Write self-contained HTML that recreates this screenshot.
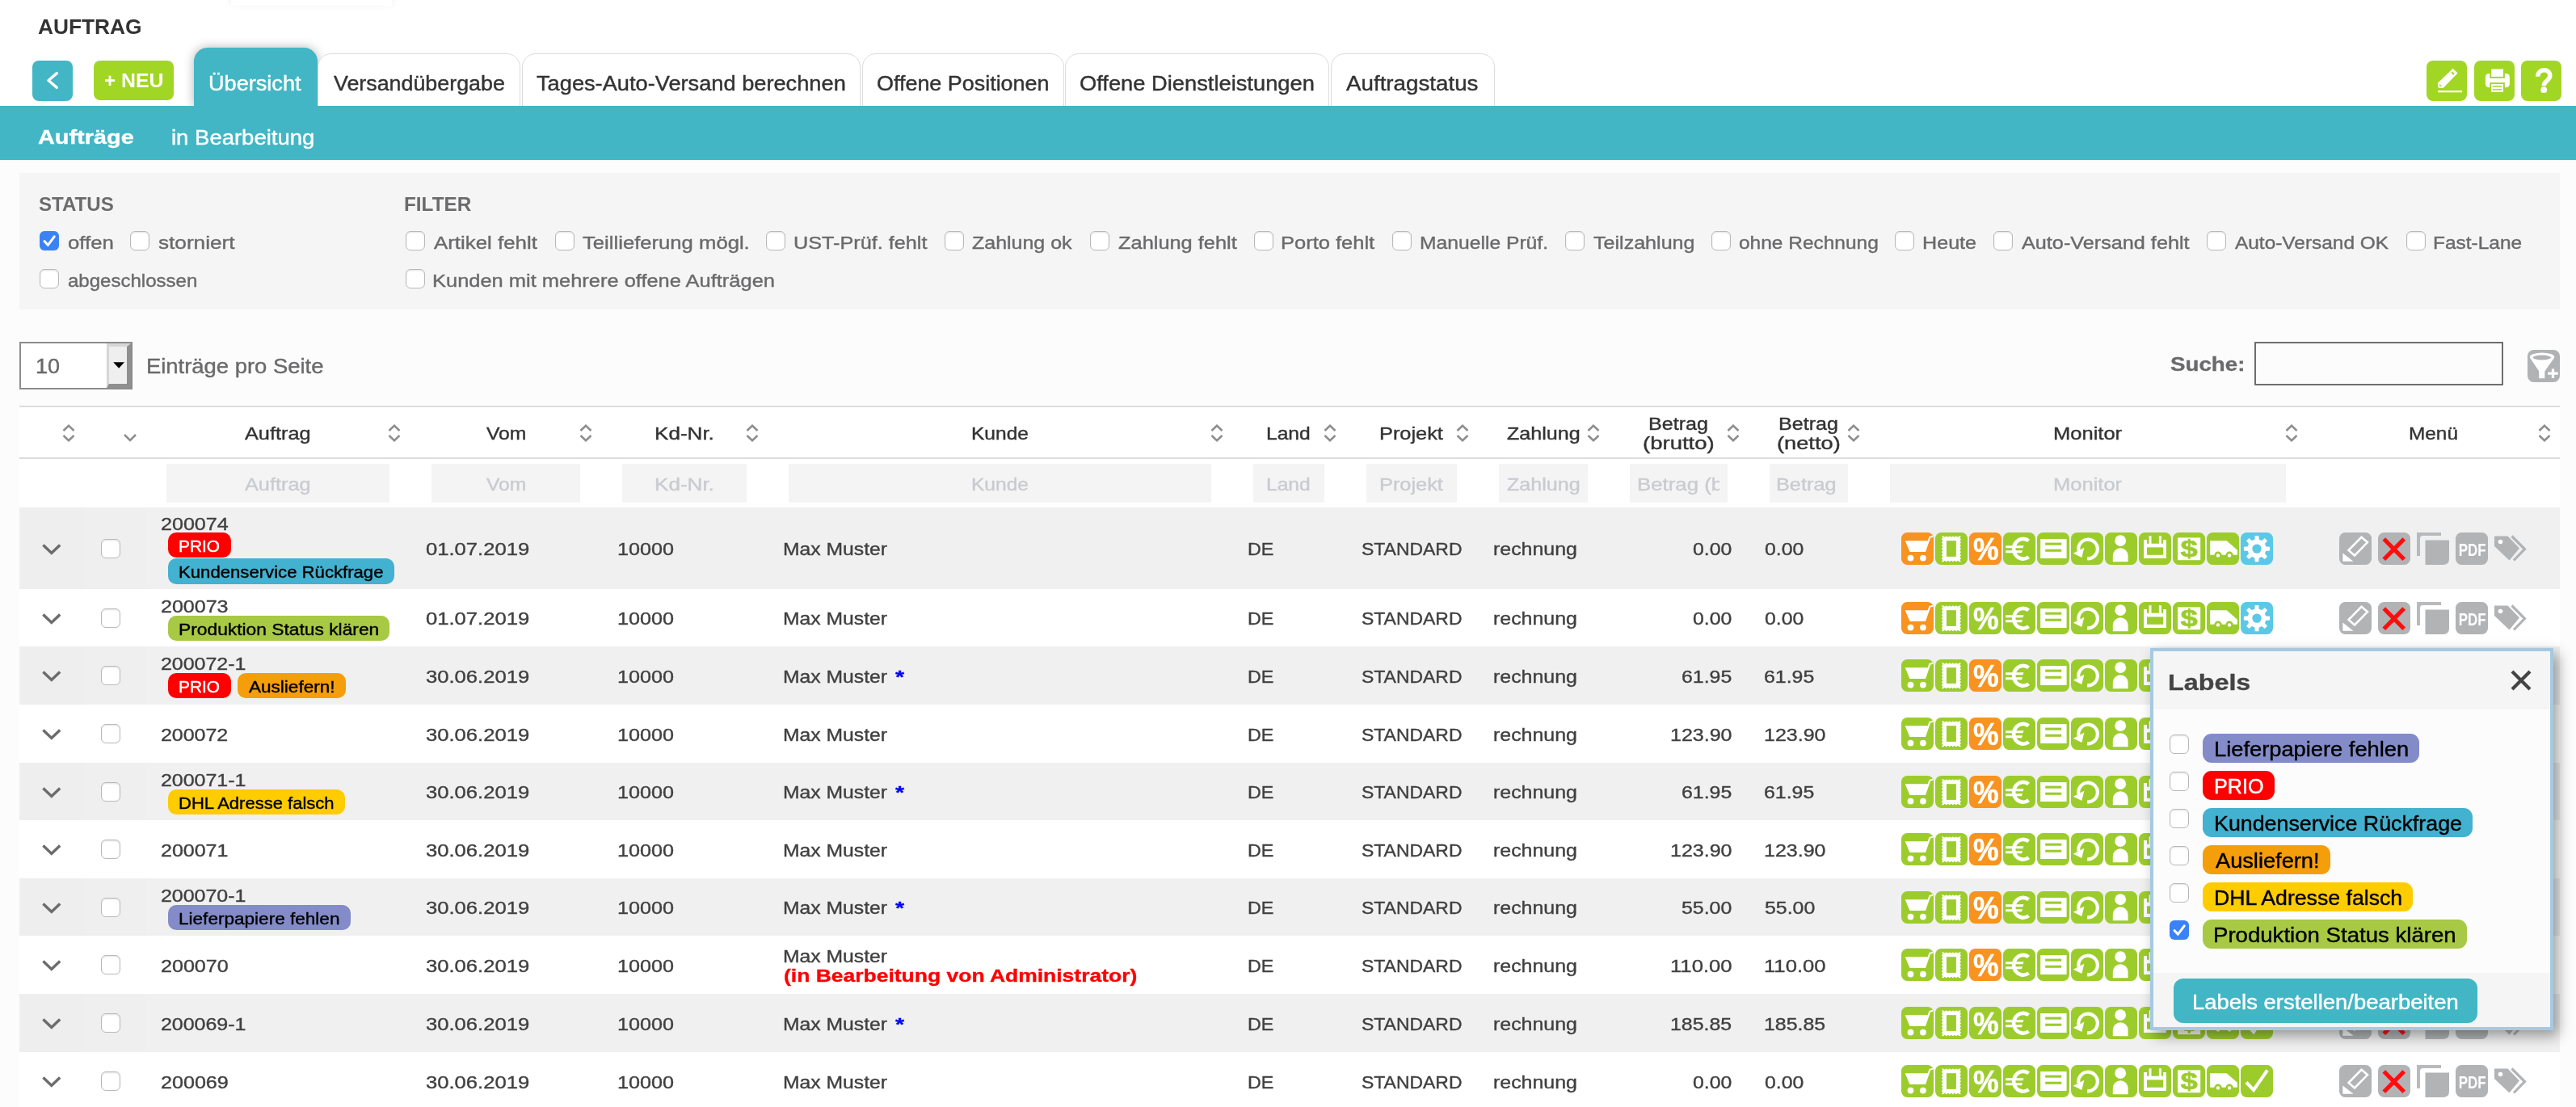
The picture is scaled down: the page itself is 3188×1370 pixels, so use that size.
<!DOCTYPE html>
<html><head><meta charset="utf-8"><title>Auftrag</title>
<style>
html,body{margin:0;padding:0;}
body{width:3188px;height:1370px;overflow:hidden;background:#fcfcfc;font-family:"Liberation Sans",sans-serif;position:relative;}
#wrap{position:absolute;left:0;top:0;width:3188px;height:1370px;overflow:hidden;will-change:transform;}
.b{position:absolute;display:block;}
.t{position:absolute;display:block;white-space:pre;line-height:1;transform-origin:0 0;}
svg text{font-family:"Liberation Sans",sans-serif;}
</style></head><body>
<div id="wrap">
<div class="b" style="left:0.00px;top:0.00px;width:3188.00px;height:131.00px;background:#fff;"></div><div class="b" style="left:286.00px;top:-12.00px;width:199.00px;height:19.00px;background:#fff;box-shadow:0 -5px 12px rgba(0,0,0,.13);"></div><span class="t" style="left:47.37px;top:20.84px;font-size:25px;color:#333;transform:scaleX(1.0516);font-weight:bold;">AUFTRAG</span><div class="b" style="left:40.00px;top:75.00px;width:50.00px;height:50.00px;background:#42b6c4;border-radius:8px;"></div><svg class="b" style="left:40.00px;top:75.00px;" width="50" height="50" viewBox="0 0 50 50"><path d="M30.3 15.6 L20 24.5 L30.300 33.4" fill="none" stroke="#fff" stroke-width="3.400" stroke-linecap="round" stroke-linejoin="round"/></svg><div class="b" style="left:116.00px;top:75.00px;width:99.00px;height:48.50px;background:#a2d624;border-radius:8px;"></div><span class="t" style="left:129.00px;top:87.68px;font-size:24px;color:#fff;transform:scaleX(1.0000);font-weight:bold;">+</span><span class="t" style="left:149.60px;top:87.68px;font-size:24px;color:#fff;transform:scaleX(1.0336);font-weight:bold;">NEU</span><div class="b" style="left:240.00px;top:59.00px;width:152.50px;height:72.50px;background:#42b6c4;border-radius:17px 17px 0 0;box-shadow:0 0 13px rgba(0,0,0,.30);"></div><span class="t" style="left:258.44px;top:91.27px;font-size:24.96px;color:#fff;transform:scaleX(1.0866);-webkit-text-stroke:0.4px currentColor;">Übersicht</span><div class="b" style="left:393.00px;top:66.00px;width:249.00px;height:70.00px;background:#fff;border:1px solid #dcdcdc;border-radius:17px 17px 0 0;"></div><span class="t" style="left:413.14px;top:91.27px;font-size:24.96px;color:#333;transform:scaleX(1.0751);-webkit-text-stroke:0.4px currentColor;">Versandübergabe</span><div class="b" style="left:645.50px;top:66.00px;width:417.80px;height:70.00px;background:#fff;border:1px solid #dcdcdc;border-radius:17px 17px 0 0;"></div><span class="t" style="left:663.80px;top:91.27px;font-size:24.96px;color:#333;transform:scaleX(1.0906);-webkit-text-stroke:0.4px currentColor;">Tages-Auto-Versand berechnen</span><div class="b" style="left:1066.50px;top:66.00px;width:248.50px;height:70.00px;background:#fff;border:1px solid #dcdcdc;border-radius:17px 17px 0 0;"></div><span class="t" style="left:1084.56px;top:91.27px;font-size:24.96px;color:#333;transform:scaleX(1.0787);-webkit-text-stroke:0.4px currentColor;">Offene Positionen</span><div class="b" style="left:1318.00px;top:66.00px;width:325.00px;height:70.00px;background:#fff;border:1px solid #dcdcdc;border-radius:17px 17px 0 0;"></div><span class="t" style="left:1336.04px;top:91.27px;font-size:24.96px;color:#333;transform:scaleX(1.0939);-webkit-text-stroke:0.4px currentColor;">Offene Dienstleistungen</span><div class="b" style="left:1646.50px;top:66.00px;width:201.00px;height:70.00px;background:#fff;border:1px solid #dcdcdc;border-radius:17px 17px 0 0;"></div><span class="t" style="left:1665.94px;top:91.27px;font-size:24.96px;color:#333;transform:scaleX(1.1116);-webkit-text-stroke:0.4px currentColor;">Auftragstatus</span><div class="b" style="left:3003.00px;top:75.00px;width:50.00px;height:50.00px;background:#a2d624;border-radius:8px;"></div><div class="b" style="left:3062.00px;top:75.00px;width:50.00px;height:50.00px;background:#a2d624;border-radius:8px;"></div><div class="b" style="left:3120.00px;top:75.00px;width:50.00px;height:50.00px;background:#a2d624;border-radius:8px;"></div><svg class="b" style="left:3003.00px;top:75.00px;" width="50" height="50" viewBox="0 0 50 50"><path d="M32.7 9.700 L38.500 15.600 L20.600 33.900 H16.200 Q14.100 33.900 14.100 31.800 V27.500 Z" fill="#fff"/><path d="M31.2 14.200 L34 17" stroke="#a2d624" stroke-width="2.200"/><path d="M16.2 28.800 V31.800 H19.200 Z" fill="#a2d624"/><rect x="14.100" y="37.100" width="30" height="2.200" fill="#fff"/></svg><svg class="b" style="left:3062.00px;top:75.00px;" width="50" height="50" viewBox="0 0 50 50"><rect x="13.900" y="16" width="30" height="17.300" rx="4.500" fill="#fff"/><rect x="19.300" y="9" width="18.600" height="12.800" fill="#a2d624"/><rect x="21.200" y="10.500" width="14.800" height="9.400" fill="#fff"/><rect x="19.300" y="27.200" width="18.600" height="8" fill="#a2d624"/><rect x="21.200" y="29" width="14.800" height="9.800" fill="#fff"/><rect x="22.900" y="31.200" width="11.300" height="1.500" fill="#a2d624"/><rect x="22.900" y="35.100" width="11.300" height="1.500" fill="#a2d624"/></svg><svg class="b" style="left:3120.00px;top:75.00px;" width="50" height="50" viewBox="0 0 50 50"><path d="M20.700 19.800 C20.700 9.300 35.800 9.300 35.800 18.600 C35.800 25 28.200 24.600 28.200 31.300" fill="none" stroke="#fff" stroke-width="5.400"/><circle cx="28.200" cy="36.200" r="3.900" fill="#fff"/></svg><div class="b" style="left:0.00px;top:131.00px;width:3188.00px;height:66.50px;background:#42b6c4;"></div><span class="t" style="left:47.28px;top:158.48px;font-size:24.12px;color:#fff;transform:scaleX(1.1975);font-weight:bold;-webkit-text-stroke:0.35px currentColor;">Aufträge</span><span class="t" style="left:211.93px;top:157.77px;font-size:24.96px;color:#fff;transform:scaleX(1.1018);-webkit-text-stroke:0.4px currentColor;">in Bearbeitung</span><div class="b" style="left:24.00px;top:214.00px;width:3143.50px;height:168.50px;background:#f5f5f5;"></div><span class="t" style="left:47.60px;top:241.43px;font-size:24px;color:#6b6b6d;transform:scaleX(1.0039);font-weight:bold;">STATUS</span><span class="t" style="left:499.63px;top:241.43px;font-size:24px;color:#6b6b6d;transform:scaleX(1.0137);font-weight:bold;">FILTER</span><div class="b" style="left:49.00px;top:286.00px;width:24.00px;height:24.00px;background:#3b82f7;border-radius:6px;"></div><svg class="b" style="left:49.00px;top:286.00px;" width="24" height="24" viewBox="0 0 24 24"><path d="M6 12.5 L10.3 17.3 L18.2 6.8" fill="none" stroke="#fff" stroke-width="3" stroke-linecap="round" stroke-linejoin="round"/></svg><span class="t" style="left:83.53px;top:288.53px;font-size:22.88px;color:#6a6a6c;transform:scaleX(1.1268);-webkit-text-stroke:0.4px currentColor;">offen</span><div class="b" style="left:161.00px;top:286.00px;width:24.00px;height:24.00px;background:#fff;border:1.5px solid #b9b9b9;border-radius:6px;box-sizing:border-box;box-shadow:inset 0 1px 2px rgba(0,0,0,.12);"></div><span class="t" style="left:195.56px;top:288.53px;font-size:22.88px;color:#6a6a6c;transform:scaleX(1.1440);-webkit-text-stroke:0.4px currentColor;">storniert</span><div class="b" style="left:49.00px;top:333.00px;width:24.00px;height:24.00px;background:#fff;border:1.5px solid #b9b9b9;border-radius:6px;box-sizing:border-box;box-shadow:inset 0 1px 2px rgba(0,0,0,.12);"></div><span class="t" style="left:83.60px;top:335.53px;font-size:22.88px;color:#6a6a6c;transform:scaleX(1.0502);-webkit-text-stroke:0.4px currentColor;">abgeschlossen</span><div class="b" style="left:502.00px;top:286.00px;width:24.00px;height:24.00px;background:#fff;border:1.5px solid #b9b9b9;border-radius:6px;box-sizing:border-box;box-shadow:inset 0 1px 2px rgba(0,0,0,.12);"></div><span class="t" style="left:537.00px;top:288.53px;font-size:22.88px;color:#6a6a6c;transform:scaleX(1.1300);-webkit-text-stroke:0.4px currentColor;">Artikel fehlt</span><div class="b" style="left:687.00px;top:286.00px;width:24.00px;height:24.00px;background:#fff;border:1.5px solid #b9b9b9;border-radius:6px;box-sizing:border-box;box-shadow:inset 0 1px 2px rgba(0,0,0,.12);"></div><span class="t" style="left:721.04px;top:288.53px;font-size:22.88px;color:#6a6a6c;transform:scaleX(1.1214);-webkit-text-stroke:0.4px currentColor;">Teillieferung mögl.</span><div class="b" style="left:948.00px;top:286.00px;width:24.00px;height:24.00px;background:#fff;border:1.5px solid #b9b9b9;border-radius:6px;box-sizing:border-box;box-shadow:inset 0 1px 2px rgba(0,0,0,.12);"></div><span class="t" style="left:981.87px;top:288.53px;font-size:22.88px;color:#6a6a6c;transform:scaleX(1.1029);-webkit-text-stroke:0.4px currentColor;">UST-Prüf. fehlt</span><div class="b" style="left:1169.00px;top:286.00px;width:24.00px;height:24.00px;background:#fff;border:1.5px solid #b9b9b9;border-radius:6px;box-sizing:border-box;box-shadow:inset 0 1px 2px rgba(0,0,0,.12);"></div><span class="t" style="left:1203.24px;top:288.53px;font-size:22.88px;color:#6a6a6c;transform:scaleX(1.0919);-webkit-text-stroke:0.4px currentColor;">Zahlung ok</span><div class="b" style="left:1348.80px;top:286.00px;width:24.00px;height:24.00px;background:#fff;border:1.5px solid #b9b9b9;border-radius:6px;box-sizing:border-box;box-shadow:inset 0 1px 2px rgba(0,0,0,.12);"></div><span class="t" style="left:1383.52px;top:288.53px;font-size:22.88px;color:#6a6a6c;transform:scaleX(1.1098);-webkit-text-stroke:0.4px currentColor;">Zahlung fehlt</span><div class="b" style="left:1551.70px;top:286.00px;width:24.00px;height:24.00px;background:#fff;border:1.5px solid #b9b9b9;border-radius:6px;box-sizing:border-box;box-shadow:inset 0 1px 2px rgba(0,0,0,.12);"></div><span class="t" style="left:1585.44px;top:288.53px;font-size:22.88px;color:#6a6a6c;transform:scaleX(1.1138);-webkit-text-stroke:0.4px currentColor;">Porto fehlt</span><div class="b" style="left:1722.90px;top:286.00px;width:24.00px;height:24.00px;background:#fff;border:1.5px solid #b9b9b9;border-radius:6px;box-sizing:border-box;box-shadow:inset 0 1px 2px rgba(0,0,0,.12);"></div><span class="t" style="left:1756.71px;top:288.53px;font-size:22.88px;color:#6a6a6c;transform:scaleX(1.0783);-webkit-text-stroke:0.4px currentColor;">Manuelle Prüf.</span><div class="b" style="left:1936.80px;top:286.00px;width:24.00px;height:24.00px;background:#fff;border:1.5px solid #b9b9b9;border-radius:6px;box-sizing:border-box;box-shadow:inset 0 1px 2px rgba(0,0,0,.12);"></div><span class="t" style="left:1971.65px;top:288.53px;font-size:22.88px;color:#6a6a6c;transform:scaleX(1.0963);-webkit-text-stroke:0.4px currentColor;">Teilzahlung</span><div class="b" style="left:2117.90px;top:286.00px;width:24.00px;height:24.00px;background:#fff;border:1.5px solid #b9b9b9;border-radius:6px;box-sizing:border-box;box-shadow:inset 0 1px 2px rgba(0,0,0,.12);"></div><span class="t" style="left:2151.88px;top:288.53px;font-size:22.88px;color:#6a6a6c;transform:scaleX(1.0697);-webkit-text-stroke:0.4px currentColor;">ohne Rechnung</span><div class="b" style="left:2345.00px;top:286.00px;width:24.00px;height:24.00px;background:#fff;border:1.5px solid #b9b9b9;border-radius:6px;box-sizing:border-box;box-shadow:inset 0 1px 2px rgba(0,0,0,.12);"></div><span class="t" style="left:2378.97px;top:288.53px;font-size:22.88px;color:#6a6a6c;transform:scaleX(1.0987);-webkit-text-stroke:0.4px currentColor;">Heute</span><div class="b" style="left:2467.20px;top:286.00px;width:24.00px;height:24.00px;background:#fff;border:1.5px solid #b9b9b9;border-radius:6px;box-sizing:border-box;box-shadow:inset 0 1px 2px rgba(0,0,0,.12);"></div><span class="t" style="left:2501.70px;top:288.53px;font-size:22.88px;color:#6a6a6c;transform:scaleX(1.1028);-webkit-text-stroke:0.4px currentColor;">Auto-Versand fehlt</span><div class="b" style="left:2731.00px;top:286.00px;width:24.00px;height:24.00px;background:#fff;border:1.5px solid #b9b9b9;border-radius:6px;box-sizing:border-box;box-shadow:inset 0 1px 2px rgba(0,0,0,.12);"></div><span class="t" style="left:2766.00px;top:288.53px;font-size:22.88px;color:#6a6a6c;transform:scaleX(1.0674);-webkit-text-stroke:0.4px currentColor;">Auto-Versand OK</span><div class="b" style="left:2977.80px;top:286.00px;width:24.00px;height:24.00px;background:#fff;border:1.5px solid #b9b9b9;border-radius:6px;box-sizing:border-box;box-shadow:inset 0 1px 2px rgba(0,0,0,.12);"></div><span class="t" style="left:3011.32px;top:288.53px;font-size:22.88px;color:#6a6a6c;transform:scaleX(1.0693);-webkit-text-stroke:0.4px currentColor;">Fast-Lane</span><div class="b" style="left:502.00px;top:333.00px;width:24.00px;height:24.00px;background:#fff;border:1.5px solid #b9b9b9;border-radius:6px;box-sizing:border-box;box-shadow:inset 0 1px 2px rgba(0,0,0,.12);"></div><span class="t" style="left:534.94px;top:335.53px;font-size:22.88px;color:#6a6a6c;transform:scaleX(1.1125);-webkit-text-stroke:0.4px currentColor;">Kunden mit mehrere offene Aufträgen</span><div class="b" style="left:24.00px;top:423.00px;width:140.00px;height:59.00px;background:#fff;border:2px solid #8c8c8c;box-sizing:border-box;"></div><div class="b" style="left:132.2px;top:425px;width:29.8px;height:55px;box-sizing:border-box;background:#efefef;border-style:solid;border-width:4px 5px 5px 3.5px;border-color:#d6d6d6 #8f8f8f #8f8f8f #d6d6d6;"></div><svg class="b" style="left:138.00px;top:446.00px;" width="20" height="12" viewBox="0 0 20 12"><path d="M2.2 2.2 H16 L9.1 9.8 Z" fill="#000"/></svg><span class="t" style="left:44.24px;top:441.47px;font-size:24.96px;color:#6a6a6c;transform:scaleX(1.0822);-webkit-text-stroke:0.4px currentColor;">10</span><span class="t" style="left:181.30px;top:441.47px;font-size:24.96px;color:#6a6a6c;transform:scaleX(1.0984);-webkit-text-stroke:0.4px currentColor;">Einträge pro Seite</span><span class="t" style="left:2686.45px;top:438.98px;font-size:24.12px;color:#6a6a6c;transform:scaleX(1.1499);font-weight:bold;-webkit-text-stroke:0.35px currentColor;">Suche:</span><div class="b" style="left:2790.00px;top:423.00px;width:308.00px;height:53.60px;background:#fcfcfc;border:2px solid #6e6e6e;box-sizing:border-box;"></div><div class="b" style="left:3128.00px;top:433.00px;width:40.00px;height:40.00px;background:#afb3b3;border-radius:8px;"></div><svg class="b" style="left:3128.00px;top:433.00px;" width="40" height="40" viewBox="0 0 40 40"><path d="M2.900 9.500 L14.200 26.500 V35.200 H21.300 V26.500 L33.300 9.500 Z" fill="#fff"/><ellipse cx="18.100" cy="8.600" rx="15.200" ry="5.200" fill="#fff"/><ellipse cx="17.800" cy="9.500" rx="11.300" ry="2.900" fill="#afb3b3"/><path d="M25.200 29.200 H37.700 M31.500 23.600 V34.900" stroke="#fff" stroke-width="3.300"/></svg><div class="b" style="left:24.00px;top:504.00px;width:3143.50px;height:870.00px;background:#fff;"></div><div class="b" style="left:24.00px;top:502.30px;width:3143.50px;height:2.00px;background:#dcdcdc;"></div><div class="b" style="left:24.00px;top:566.00px;width:3143.50px;height:2.00px;background:#dcdcdc;"></div><svg class="b" style="left:76.00px;top:524.00px;" width="18" height="24" viewBox="0 0 18 24"><path d="M2.5 9 L9 2.8 L15.5 9 M2.5 15 L9 21.2 L15.5 15" fill="none" stroke="#8e8e8e" stroke-width="2.6" stroke-linejoin="miter"/></svg><svg class="b" style="left:479.25px;top:524.00px;" width="18" height="24" viewBox="0 0 18 24"><path d="M2.5 9 L9 2.8 L15.5 9 M2.5 15 L9 21.2 L15.5 15" fill="none" stroke="#8e8e8e" stroke-width="2.6" stroke-linejoin="miter"/></svg><svg class="b" style="left:716.00px;top:524.00px;" width="18" height="24" viewBox="0 0 18 24"><path d="M2.5 9 L9 2.8 L15.5 9 M2.5 15 L9 21.2 L15.5 15" fill="none" stroke="#8e8e8e" stroke-width="2.6" stroke-linejoin="miter"/></svg><svg class="b" style="left:921.75px;top:524.00px;" width="18" height="24" viewBox="0 0 18 24"><path d="M2.5 9 L9 2.8 L15.5 9 M2.5 15 L9 21.2 L15.5 15" fill="none" stroke="#8e8e8e" stroke-width="2.6" stroke-linejoin="miter"/></svg><svg class="b" style="left:1497.00px;top:524.00px;" width="18" height="24" viewBox="0 0 18 24"><path d="M2.5 9 L9 2.8 L15.5 9 M2.5 15 L9 21.2 L15.5 15" fill="none" stroke="#8e8e8e" stroke-width="2.6" stroke-linejoin="miter"/></svg><svg class="b" style="left:1636.75px;top:524.00px;" width="18" height="24" viewBox="0 0 18 24"><path d="M2.5 9 L9 2.8 L15.5 9 M2.5 15 L9 21.2 L15.5 15" fill="none" stroke="#8e8e8e" stroke-width="2.6" stroke-linejoin="miter"/></svg><svg class="b" style="left:1800.75px;top:524.00px;" width="18" height="24" viewBox="0 0 18 24"><path d="M2.5 9 L9 2.8 L15.5 9 M2.5 15 L9 21.2 L15.5 15" fill="none" stroke="#8e8e8e" stroke-width="2.6" stroke-linejoin="miter"/></svg><svg class="b" style="left:1963.00px;top:524.00px;" width="18" height="24" viewBox="0 0 18 24"><path d="M2.5 9 L9 2.8 L15.5 9 M2.5 15 L9 21.2 L15.5 15" fill="none" stroke="#8e8e8e" stroke-width="2.6" stroke-linejoin="miter"/></svg><svg class="b" style="left:2135.75px;top:524.00px;" width="18" height="24" viewBox="0 0 18 24"><path d="M2.5 9 L9 2.8 L15.5 9 M2.5 15 L9 21.2 L15.5 15" fill="none" stroke="#8e8e8e" stroke-width="2.6" stroke-linejoin="miter"/></svg><svg class="b" style="left:2284.75px;top:524.00px;" width="18" height="24" viewBox="0 0 18 24"><path d="M2.5 9 L9 2.8 L15.5 9 M2.5 15 L9 21.2 L15.5 15" fill="none" stroke="#8e8e8e" stroke-width="2.6" stroke-linejoin="miter"/></svg><svg class="b" style="left:2826.75px;top:524.00px;" width="18" height="24" viewBox="0 0 18 24"><path d="M2.5 9 L9 2.8 L15.5 9 M2.5 15 L9 21.2 L15.5 15" fill="none" stroke="#8e8e8e" stroke-width="2.6" stroke-linejoin="miter"/></svg><svg class="b" style="left:3139.50px;top:524.00px;" width="18" height="24" viewBox="0 0 18 24"><path d="M2.5 9 L9 2.8 L15.5 9 M2.5 15 L9 21.2 L15.5 15" fill="none" stroke="#8e8e8e" stroke-width="2.6" stroke-linejoin="miter"/></svg><svg class="b" style="left:151.00px;top:534.00px;" width="20" height="14" viewBox="0 0 20 14"><path d="M3 4 L10 11 L17 4" fill="none" stroke="#8e8e8e" stroke-width="2.6"/></svg><span class="t" style="left:303.25px;top:525.28px;font-size:22.88px;color:#333;transform:scaleX(1.1050);-webkit-text-stroke:0.4px currentColor;">Auftrag</span><span class="t" style="left:601.64px;top:525.28px;font-size:22.88px;color:#333;transform:scaleX(1.0791);-webkit-text-stroke:0.4px currentColor;">Vom</span><span class="t" style="left:809.89px;top:525.28px;font-size:22.88px;color:#333;transform:scaleX(1.1393);-webkit-text-stroke:0.4px currentColor;">Kd-Nr.</span><span class="t" style="left:1201.52px;top:525.28px;font-size:22.88px;color:#333;transform:scaleX(1.0726);-webkit-text-stroke:0.4px currentColor;">Kunde</span><span class="t" style="left:1567.26px;top:525.28px;font-size:22.88px;color:#333;transform:scaleX(1.0756);-webkit-text-stroke:0.4px currentColor;">Land</span><span class="t" style="left:1706.70px;top:525.28px;font-size:22.88px;color:#333;transform:scaleX(1.1083);-webkit-text-stroke:0.4px currentColor;">Projekt</span><span class="t" style="left:1864.73px;top:525.28px;font-size:22.88px;color:#333;transform:scaleX(1.0980);-webkit-text-stroke:0.4px currentColor;">Zahlung</span><span class="t" style="left:2541.19px;top:525.28px;font-size:22.88px;color:#333;transform:scaleX(1.1160);-webkit-text-stroke:0.4px currentColor;">Monitor</span><span class="t" style="left:2980.78px;top:525.28px;font-size:22.88px;color:#333;transform:scaleX(1.0648);-webkit-text-stroke:0.4px currentColor;">Menü</span><span class="t" style="left:2039.97px;top:512.78px;font-size:22.88px;color:#333;transform:scaleX(1.0981);-webkit-text-stroke:0.4px currentColor;">Betrag</span><span class="t" style="left:2032.82px;top:537.28px;font-size:22.88px;color:#333;transform:scaleX(1.2034);-webkit-text-stroke:0.4px currentColor;">(brutto)</span><span class="t" style="left:2201.22px;top:512.78px;font-size:22.88px;color:#333;transform:scaleX(1.0981);-webkit-text-stroke:0.4px currentColor;">Betrag</span><span class="t" style="left:2199.08px;top:537.28px;font-size:22.88px;color:#333;transform:scaleX(1.1909);-webkit-text-stroke:0.4px currentColor;">(netto)</span><div class="b" style="left:205.75px;top:574.00px;width:275.75px;height:47.50px;background:#f4f4f4;"></div><span class="t" style="left:303.25px;top:587.78px;font-size:22.88px;color:#c9cbcf;transform:scaleX(1.1050);-webkit-text-stroke:0.4px currentColor;">Auftrag</span><div class="b" style="left:533.75px;top:574.00px;width:184.00px;height:47.50px;background:#f4f4f4;"></div><span class="t" style="left:601.64px;top:587.78px;font-size:22.88px;color:#c9cbcf;transform:scaleX(1.0791);-webkit-text-stroke:0.4px currentColor;">Vom</span><div class="b" style="left:769.75px;top:574.00px;width:153.75px;height:47.50px;background:#f4f4f4;"></div><span class="t" style="left:809.89px;top:587.78px;font-size:22.88px;color:#c9cbcf;transform:scaleX(1.1393);-webkit-text-stroke:0.4px currentColor;">Kd-Nr.</span><div class="b" style="left:975.75px;top:574.00px;width:523.00px;height:47.50px;background:#f4f4f4;"></div><span class="t" style="left:1201.52px;top:587.78px;font-size:22.88px;color:#c9cbcf;transform:scaleX(1.0726);-webkit-text-stroke:0.4px currentColor;">Kunde</span><div class="b" style="left:1550.75px;top:574.00px;width:87.75px;height:47.50px;background:#f4f4f4;"></div><span class="t" style="left:1567.26px;top:587.78px;font-size:22.88px;color:#c9cbcf;transform:scaleX(1.0756);-webkit-text-stroke:0.4px currentColor;">Land</span><div class="b" style="left:1690.50px;top:574.00px;width:112.00px;height:47.50px;background:#f4f4f4;"></div><span class="t" style="left:1706.70px;top:587.78px;font-size:22.88px;color:#c9cbcf;transform:scaleX(1.1083);-webkit-text-stroke:0.4px currentColor;">Projekt</span><div class="b" style="left:1854.50px;top:574.00px;width:110.00px;height:47.50px;background:#f4f4f4;"></div><span class="t" style="left:1864.73px;top:587.78px;font-size:22.88px;color:#c9cbcf;transform:scaleX(1.0980);-webkit-text-stroke:0.4px currentColor;">Zahlung</span><div class="b" style="left:2338.75px;top:574.00px;width:489.75px;height:47.50px;background:#f4f4f4;"></div><span class="t" style="left:2541.19px;top:587.78px;font-size:22.88px;color:#c9cbcf;transform:scaleX(1.1160);-webkit-text-stroke:0.4px currentColor;">Monitor</span><div class="b" style="left:2017.00px;top:574.00px;width:120.50px;height:47.50px;background:#f4f4f4;"></div><div class="b" style="left:2017px;top:574px;width:111px;height:47.5px;overflow:hidden;"><span class="t" style="left:8.91px;top:13.78px;font-size:22.88px;color:#c9cbcf;transform:scaleX(1.1277);-webkit-text-stroke:0.4px currentColor;">Betrag (brutto)</span></div><div class="b" style="left:2189.75px;top:574.00px;width:96.75px;height:47.50px;background:#f4f4f4;"></div><span class="t" style="left:2197.95px;top:587.78px;font-size:22.88px;color:#c9cbcf;transform:scaleX(1.1059);-webkit-text-stroke:0.4px currentColor;">Betrag</span><div class="b" style="left:24.00px;top:628.00px;width:3143.50px;height:101.00px;background:#f0f0f0;"></div><div class="b" style="left:24.00px;top:628.00px;width:80.00px;height:101.00px;background:#eeeeee;"></div><div class="b" style="left:104.00px;top:628.00px;width:77.00px;height:101.00px;background:#efefef;"></div><svg class="b" style="left:50.00px;top:670.50px;" width="28" height="18" viewBox="0 0 28 18"><path d="M3.400 3.600 L13.800 13.400 L24.200 3.600" fill="none" stroke="#6c6c6c" stroke-width="3.500" stroke-linecap="butt" stroke-linejoin="miter"/></svg><div class="b" style="left:125.25px;top:666.70px;width:24.00px;height:24.00px;background:#fff;border:1.5px solid #b9b9b9;border-radius:6px;box-sizing:border-box;box-shadow:inset 0 1px 2px rgba(0,0,0,.12);"></div><span class="t" style="left:199.24px;top:636.78px;font-size:22.88px;color:#404040;transform:scaleX(1.0964);-webkit-text-stroke:0.4px currentColor;">200074</span><div class="b" style="left:208.00px;top:658.75px;width:77.75px;height:31.60px;background:#ff0000;border-radius:10px;"></div><span class="t" style="left:221.00px;top:665.64px;font-size:20.8px;color:#fff;transform:scaleX(1.0021);-webkit-text-stroke:0.4px currentColor;">PRIO</span><div class="b" style="left:208.00px;top:691.00px;width:279.50px;height:31.60px;background:#43b1d0;border-radius:10px;"></div><span class="t" style="left:220.89px;top:697.89px;font-size:20.8px;color:#000;transform:scaleX(1.0645);-webkit-text-stroke:0.4px currentColor;">Kundenservice Rückfrage</span><span class="t" style="left:527.30px;top:668.43px;font-size:22.88px;color:#404040;transform:scaleX(1.1197);-webkit-text-stroke:0.4px currentColor;">01.07.2019</span><span class="t" style="left:764.13px;top:668.43px;font-size:22.88px;color:#404040;transform:scaleX(1.1007);-webkit-text-stroke:0.4px currentColor;">10000</span><span class="t" style="left:969.00px;top:668.43px;font-size:22.88px;color:#404040;transform:scaleX(1.0796);-webkit-text-stroke:0.4px currentColor;">Max Muster</span><span class="t" style="left:1544.12px;top:668.43px;font-size:22.88px;color:#404040;transform:scaleX(1.0172);-webkit-text-stroke:0.4px currentColor;">DE</span><span class="t" style="left:1684.50px;top:668.43px;font-size:22.88px;color:#404040;transform:scaleX(1.0029);-webkit-text-stroke:0.4px currentColor;">STANDARD</span><span class="t" style="left:1848.12px;top:668.43px;font-size:22.88px;color:#404040;transform:scaleX(1.0891);-webkit-text-stroke:0.4px currentColor;">rechnung</span><span class="t" style="left:2094.86px;top:668.43px;font-size:22.88px;color:#404040;transform:scaleX(1.0845);-webkit-text-stroke:0.4px currentColor;">0.00</span><span class="t" style="left:2183.58px;top:668.43px;font-size:22.88px;color:#404040;transform:scaleX(1.0845);-webkit-text-stroke:0.4px currentColor;">0.00</span><svg class="b" style="left:2352.75px;top:658.50px;" width="40" height="40" viewBox="0 0 40 40"><rect width="40" height="40" rx="7.5" fill="#f7931e"/><path d="M34.6 4.900 L38.800 3.700 L39.400 5.700 L36.200 6.600 L30 23.900 H10.500 L4.700 10.200 H32.600 Z" fill="#fff"/><circle cx="11.500" cy="31.600" r="3.900" fill="#fff"/><circle cx="26.900" cy="31.600" r="3.900" fill="#fff"/></svg><svg class="b" style="left:2394.75px;top:658.50px;" width="40" height="40" viewBox="0 0 40 40"><rect width="40" height="40" rx="7.5" fill="#9ccc2c"/><rect x="8.100" y="4.500" width="23.600" height="31.600" fill="#fff"/><circle cx="7.800" cy="6.60" r="1.350" fill="#9ccc2c"/><circle cx="32" cy="6.60" r="1.350" fill="#9ccc2c"/><circle cx="7.800" cy="10.52" r="1.350" fill="#9ccc2c"/><circle cx="32" cy="10.52" r="1.350" fill="#9ccc2c"/><circle cx="7.800" cy="14.44" r="1.350" fill="#9ccc2c"/><circle cx="32" cy="14.44" r="1.350" fill="#9ccc2c"/><circle cx="7.800" cy="18.36" r="1.350" fill="#9ccc2c"/><circle cx="32" cy="18.36" r="1.350" fill="#9ccc2c"/><circle cx="7.800" cy="22.28" r="1.350" fill="#9ccc2c"/><circle cx="32" cy="22.28" r="1.350" fill="#9ccc2c"/><circle cx="7.800" cy="26.20" r="1.350" fill="#9ccc2c"/><circle cx="32" cy="26.20" r="1.350" fill="#9ccc2c"/><circle cx="7.800" cy="30.12" r="1.350" fill="#9ccc2c"/><circle cx="32" cy="30.12" r="1.350" fill="#9ccc2c"/><circle cx="7.800" cy="34.04" r="1.350" fill="#9ccc2c"/><circle cx="32" cy="34.04" r="1.350" fill="#9ccc2c"/><circle cx="11.90" cy="4.200" r="1.350" fill="#9ccc2c"/><circle cx="11.90" cy="36.400" r="1.350" fill="#9ccc2c"/><circle cx="15.90" cy="4.200" r="1.350" fill="#9ccc2c"/><circle cx="15.90" cy="36.400" r="1.350" fill="#9ccc2c"/><circle cx="19.90" cy="4.200" r="1.350" fill="#9ccc2c"/><circle cx="19.90" cy="36.400" r="1.350" fill="#9ccc2c"/><circle cx="23.90" cy="4.200" r="1.350" fill="#9ccc2c"/><circle cx="23.90" cy="36.400" r="1.350" fill="#9ccc2c"/><circle cx="27.90" cy="4.200" r="1.350" fill="#9ccc2c"/><circle cx="27.90" cy="36.400" r="1.350" fill="#9ccc2c"/><rect x="13.900" y="10.200" width="12" height="19.700" fill="#9ccc2c"/></svg><svg class="b" style="left:2436.75px;top:658.50px;" width="40" height="40" viewBox="0 0 40 40"><rect width="40" height="40" rx="7.5" fill="#f7931e"/><text x="20.700" y="34" font-family="Liberation Sans" font-weight="bold" font-size="38.500" text-anchor="middle" fill="#fff" stroke="#fff" stroke-width=".5" textLength="31.600" lengthAdjust="spacingAndGlyphs">%</text></svg><svg class="b" style="left:2478.75px;top:658.50px;" width="40" height="40" viewBox="0 0 40 40"><rect width="40" height="40" rx="7.5" fill="#9ccc2c"/><path d="M31.600 10.300 A11.600 12.400 0 1 0 31.600 30.300" fill="none" stroke="#fff" stroke-width="4.600"/><path d="M3.200 16.200 H25.500 L24.500 19.200 H3.200 Z M3.200 22.200 H24 L23 25.200 H3.200 Z" fill="#fff"/></svg><svg class="b" style="left:2520.75px;top:658.50px;" width="40" height="40" viewBox="0 0 40 40"><rect width="40" height="40" rx="7.5" fill="#9ccc2c"/><rect x="4.200" y="8.100" width="32.400" height="23.900" fill="#fff"/><rect x="10.200" y="12.600" width="20" height="3.100" fill="#9ccc2c"/><rect x="10.200" y="20.700" width="20" height="3.100" fill="#9ccc2c"/></svg><svg class="b" style="left:2562.75px;top:658.50px;" width="40" height="40" viewBox="0 0 40 40"><rect width="40" height="40" rx="7.5" fill="#9ccc2c"/><path d="M9.400 22.500 A11.800 11.800 0 1 1 20 32.250" fill="none" stroke="#fff" stroke-width="4.200"/><path d="M2.800 25.800 L16.400 18.800 L13.300 31 Z" fill="#fff"/></svg><svg class="b" style="left:2604.75px;top:658.50px;" width="40" height="40" viewBox="0 0 40 40"><rect width="40" height="40" rx="7.5" fill="#9ccc2c"/><circle cx="19.200" cy="10.200" r="6.900" fill="#fff"/><path d="M9.800 36.300 V28.600 A9.400 9.400 0 0 1 28.600 28.600 V36.300 Z" fill="#fff"/></svg><svg class="b" style="left:2646.75px;top:658.50px;" width="40" height="40" viewBox="0 0 40 40"><rect width="40" height="40" rx="7.5" fill="#9ccc2c"/><path d="M6.100 9 H10 V13.700 H12.600 V4.300 H15.500 V13.700 H24.900 V4.300 H27.900 V13.700 H30 V9 H33.900 V32 H6.100 Z" fill="#fff"/><rect x="10" y="18.400" width="20" height="9.400" fill="#9ccc2c"/></svg><svg class="b" style="left:2688.75px;top:658.50px;" width="40" height="40" viewBox="0 0 40 40"><rect width="40" height="40" rx="7.5" fill="#9ccc2c"/><rect x="6.100" y="6.400" width="28.100" height="27.800" fill="#fff"/><text x="20.150" y="29.600" font-family="Liberation Sans" font-weight="bold" font-size="29" text-anchor="middle" fill="#9ccc2c" stroke="#9ccc2c" stroke-width=".6" textLength="21.300" lengthAdjust="spacingAndGlyphs">$</text></svg><svg class="b" style="left:2730.75px;top:658.50px;" width="40" height="40" viewBox="0 0 40 40"><rect width="40" height="40" rx="7.5" fill="#9ccc2c"/><path d="M4.200 27.800 V10.200 H24.700 L37.900 21.800 V27.800 Z" fill="#fff"/><circle cx="14" cy="28.200" r="4.700" fill="#9ccc2c"/><circle cx="28.100" cy="28.200" r="4.700" fill="#9ccc2c"/><circle cx="14" cy="28.400" r="2.200" fill="#fff"/><circle cx="28.100" cy="28.400" r="2.200" fill="#fff"/></svg><svg class="b" style="left:2772.75px;top:658.50px;" width="40" height="40" viewBox="0 0 40 40"><rect width="40" height="40" rx="7.5" fill="#5bc8e6"/><g transform="translate(20 20.100)"><path d="M-2.900 -10 L-2.300 -16.100 H2.300 L2.900 -10 Z" fill="#fff" transform="rotate(0)"/><path d="M-2.900 -10 L-2.300 -16.100 H2.300 L2.900 -10 Z" fill="#fff" transform="rotate(45)"/><path d="M-2.900 -10 L-2.300 -16.100 H2.300 L2.900 -10 Z" fill="#fff" transform="rotate(90)"/><path d="M-2.900 -10 L-2.300 -16.100 H2.300 L2.900 -10 Z" fill="#fff" transform="rotate(135)"/><path d="M-2.900 -10 L-2.300 -16.100 H2.300 L2.900 -10 Z" fill="#fff" transform="rotate(180)"/><path d="M-2.900 -10 L-2.300 -16.100 H2.300 L2.900 -10 Z" fill="#fff" transform="rotate(225)"/><path d="M-2.900 -10 L-2.300 -16.100 H2.300 L2.900 -10 Z" fill="#fff" transform="rotate(270)"/><path d="M-2.900 -10 L-2.300 -16.100 H2.300 L2.900 -10 Z" fill="#fff" transform="rotate(315)"/><circle r="11.600" fill="#fff"/><circle r="5.700" fill="#5bc8e6"/></g></svg><svg class="b" style="left:2894.75px;top:658.50px;" width="40" height="40" viewBox="0 0 40 40"><rect width="40" height="40" rx="7.5" fill="#b1b3b5"/><path d="M11.500 22 L27.500 5.800 L35 12.200 L19 28.500 Z" fill="none" stroke="#fff" stroke-width="2.500"/><path d="M4.300 25.500 V35.800 H17.500 Z" fill="#fff"/></svg><svg class="b" style="left:2942.75px;top:658.50px;" width="40" height="40" viewBox="0 0 40 40"><rect width="40" height="40" rx="7.5" fill="#b1b3b5"/><path d="M7.300 8 L32.200 33.300 M32.200 8 L7.300 33.300" stroke="#ff0d0d" stroke-width="5.200"/></svg><svg class="b" style="left:2990.75px;top:658.50px;overflow:hidden;" width="40" height="40" viewBox="0 0 40 40"><path d="M0 29 V7.500 Q0 0 7.500 0 H30" fill="none" stroke="#b1b3b5" stroke-width="8" opacity=".9"/><path d="M10.500 9.500 H40 V32.500 Q40 40 32.500 40 H10.500 Z" fill="#b1b3b5"/></svg><svg class="b" style="left:3038.75px;top:658.50px;" width="40" height="40" viewBox="0 0 40 40"><rect width="40" height="40" rx="7.5" fill="#b1b3b5"/><text x="20.700" y="29.300" font-family="Liberation Sans" font-weight="bold" font-size="22.800" text-anchor="middle" fill="#fff" textLength="34" lengthAdjust="spacingAndGlyphs">PDF</text></svg><svg class="b" style="left:3086.75px;top:658.50px;" width="40" height="40" viewBox="0 0 40 40"><path d="M0 4.500 H16.500 L31 19.500 L18.500 34.500 L0 17 Z" fill="#b1b3b5"/><circle cx="7.500" cy="11.500" r="2.800" fill="#fff"/><path d="M21.500 4.500 L37.500 20.500 L24 34.500" fill="none" stroke="#b1b3b5" stroke-width="3.200"/></svg><svg class="b" style="left:50.00px;top:756.50px;" width="28" height="18" viewBox="0 0 28 18"><path d="M3.400 3.600 L13.800 13.400 L24.200 3.600" fill="none" stroke="#6c6c6c" stroke-width="3.500" stroke-linecap="butt" stroke-linejoin="miter"/></svg><div class="b" style="left:125.25px;top:752.70px;width:24.00px;height:24.00px;background:#fff;border:1.5px solid #b9b9b9;border-radius:6px;box-sizing:border-box;box-shadow:inset 0 1px 2px rgba(0,0,0,.12);"></div><span class="t" style="left:199.24px;top:738.93px;font-size:22.88px;color:#404040;transform:scaleX(1.0941);-webkit-text-stroke:0.4px currentColor;">200073</span><div class="b" style="left:208.00px;top:761.70px;width:273.50px;height:31.60px;background:#a8c943;border-radius:10px;"></div><span class="t" style="left:220.84px;top:768.59px;font-size:20.8px;color:#000;transform:scaleX(1.0957);-webkit-text-stroke:0.4px currentColor;">Produktion Status klären</span><span class="t" style="left:527.30px;top:754.43px;font-size:22.88px;color:#404040;transform:scaleX(1.1197);-webkit-text-stroke:0.4px currentColor;">01.07.2019</span><span class="t" style="left:764.13px;top:754.43px;font-size:22.88px;color:#404040;transform:scaleX(1.1007);-webkit-text-stroke:0.4px currentColor;">10000</span><span class="t" style="left:969.00px;top:754.43px;font-size:22.88px;color:#404040;transform:scaleX(1.0796);-webkit-text-stroke:0.4px currentColor;">Max Muster</span><span class="t" style="left:1544.12px;top:754.43px;font-size:22.88px;color:#404040;transform:scaleX(1.0172);-webkit-text-stroke:0.4px currentColor;">DE</span><span class="t" style="left:1684.50px;top:754.43px;font-size:22.88px;color:#404040;transform:scaleX(1.0029);-webkit-text-stroke:0.4px currentColor;">STANDARD</span><span class="t" style="left:1848.12px;top:754.43px;font-size:22.88px;color:#404040;transform:scaleX(1.0891);-webkit-text-stroke:0.4px currentColor;">rechnung</span><span class="t" style="left:2094.86px;top:754.43px;font-size:22.88px;color:#404040;transform:scaleX(1.0845);-webkit-text-stroke:0.4px currentColor;">0.00</span><span class="t" style="left:2183.58px;top:754.43px;font-size:22.88px;color:#404040;transform:scaleX(1.0845);-webkit-text-stroke:0.4px currentColor;">0.00</span><svg class="b" style="left:2352.75px;top:744.50px;" width="40" height="40" viewBox="0 0 40 40"><rect width="40" height="40" rx="7.5" fill="#f7931e"/><path d="M34.6 4.900 L38.800 3.700 L39.400 5.700 L36.200 6.600 L30 23.900 H10.500 L4.700 10.200 H32.600 Z" fill="#fff"/><circle cx="11.500" cy="31.600" r="3.900" fill="#fff"/><circle cx="26.900" cy="31.600" r="3.900" fill="#fff"/></svg><svg class="b" style="left:2394.75px;top:744.50px;" width="40" height="40" viewBox="0 0 40 40"><rect width="40" height="40" rx="7.5" fill="#9ccc2c"/><rect x="8.100" y="4.500" width="23.600" height="31.600" fill="#fff"/><circle cx="7.800" cy="6.60" r="1.350" fill="#9ccc2c"/><circle cx="32" cy="6.60" r="1.350" fill="#9ccc2c"/><circle cx="7.800" cy="10.52" r="1.350" fill="#9ccc2c"/><circle cx="32" cy="10.52" r="1.350" fill="#9ccc2c"/><circle cx="7.800" cy="14.44" r="1.350" fill="#9ccc2c"/><circle cx="32" cy="14.44" r="1.350" fill="#9ccc2c"/><circle cx="7.800" cy="18.36" r="1.350" fill="#9ccc2c"/><circle cx="32" cy="18.36" r="1.350" fill="#9ccc2c"/><circle cx="7.800" cy="22.28" r="1.350" fill="#9ccc2c"/><circle cx="32" cy="22.28" r="1.350" fill="#9ccc2c"/><circle cx="7.800" cy="26.20" r="1.350" fill="#9ccc2c"/><circle cx="32" cy="26.20" r="1.350" fill="#9ccc2c"/><circle cx="7.800" cy="30.12" r="1.350" fill="#9ccc2c"/><circle cx="32" cy="30.12" r="1.350" fill="#9ccc2c"/><circle cx="7.800" cy="34.04" r="1.350" fill="#9ccc2c"/><circle cx="32" cy="34.04" r="1.350" fill="#9ccc2c"/><circle cx="11.90" cy="4.200" r="1.350" fill="#9ccc2c"/><circle cx="11.90" cy="36.400" r="1.350" fill="#9ccc2c"/><circle cx="15.90" cy="4.200" r="1.350" fill="#9ccc2c"/><circle cx="15.90" cy="36.400" r="1.350" fill="#9ccc2c"/><circle cx="19.90" cy="4.200" r="1.350" fill="#9ccc2c"/><circle cx="19.90" cy="36.400" r="1.350" fill="#9ccc2c"/><circle cx="23.90" cy="4.200" r="1.350" fill="#9ccc2c"/><circle cx="23.90" cy="36.400" r="1.350" fill="#9ccc2c"/><circle cx="27.90" cy="4.200" r="1.350" fill="#9ccc2c"/><circle cx="27.90" cy="36.400" r="1.350" fill="#9ccc2c"/><rect x="13.900" y="10.200" width="12" height="19.700" fill="#9ccc2c"/></svg><svg class="b" style="left:2436.75px;top:744.50px;" width="40" height="40" viewBox="0 0 40 40"><rect width="40" height="40" rx="7.5" fill="#9ccc2c"/><text x="20.700" y="34" font-family="Liberation Sans" font-weight="bold" font-size="38.500" text-anchor="middle" fill="#fff" stroke="#fff" stroke-width=".5" textLength="31.600" lengthAdjust="spacingAndGlyphs">%</text></svg><svg class="b" style="left:2478.75px;top:744.50px;" width="40" height="40" viewBox="0 0 40 40"><rect width="40" height="40" rx="7.5" fill="#9ccc2c"/><path d="M31.600 10.300 A11.600 12.400 0 1 0 31.600 30.300" fill="none" stroke="#fff" stroke-width="4.600"/><path d="M3.200 16.200 H25.500 L24.500 19.200 H3.200 Z M3.200 22.200 H24 L23 25.200 H3.200 Z" fill="#fff"/></svg><svg class="b" style="left:2520.75px;top:744.50px;" width="40" height="40" viewBox="0 0 40 40"><rect width="40" height="40" rx="7.5" fill="#9ccc2c"/><rect x="4.200" y="8.100" width="32.400" height="23.900" fill="#fff"/><rect x="10.200" y="12.600" width="20" height="3.100" fill="#9ccc2c"/><rect x="10.200" y="20.700" width="20" height="3.100" fill="#9ccc2c"/></svg><svg class="b" style="left:2562.75px;top:744.50px;" width="40" height="40" viewBox="0 0 40 40"><rect width="40" height="40" rx="7.5" fill="#9ccc2c"/><path d="M9.400 22.500 A11.800 11.800 0 1 1 20 32.250" fill="none" stroke="#fff" stroke-width="4.200"/><path d="M2.800 25.800 L16.400 18.800 L13.300 31 Z" fill="#fff"/></svg><svg class="b" style="left:2604.75px;top:744.50px;" width="40" height="40" viewBox="0 0 40 40"><rect width="40" height="40" rx="7.5" fill="#9ccc2c"/><circle cx="19.200" cy="10.200" r="6.900" fill="#fff"/><path d="M9.800 36.300 V28.600 A9.400 9.400 0 0 1 28.600 28.600 V36.300 Z" fill="#fff"/></svg><svg class="b" style="left:2646.75px;top:744.50px;" width="40" height="40" viewBox="0 0 40 40"><rect width="40" height="40" rx="7.5" fill="#9ccc2c"/><path d="M6.100 9 H10 V13.700 H12.600 V4.300 H15.500 V13.700 H24.900 V4.300 H27.900 V13.700 H30 V9 H33.900 V32 H6.100 Z" fill="#fff"/><rect x="10" y="18.400" width="20" height="9.400" fill="#9ccc2c"/></svg><svg class="b" style="left:2688.75px;top:744.50px;" width="40" height="40" viewBox="0 0 40 40"><rect width="40" height="40" rx="7.5" fill="#9ccc2c"/><rect x="6.100" y="6.400" width="28.100" height="27.800" fill="#fff"/><text x="20.150" y="29.600" font-family="Liberation Sans" font-weight="bold" font-size="29" text-anchor="middle" fill="#9ccc2c" stroke="#9ccc2c" stroke-width=".6" textLength="21.300" lengthAdjust="spacingAndGlyphs">$</text></svg><svg class="b" style="left:2730.75px;top:744.50px;" width="40" height="40" viewBox="0 0 40 40"><rect width="40" height="40" rx="7.5" fill="#9ccc2c"/><path d="M4.200 27.800 V10.200 H24.700 L37.900 21.800 V27.800 Z" fill="#fff"/><circle cx="14" cy="28.200" r="4.700" fill="#9ccc2c"/><circle cx="28.100" cy="28.200" r="4.700" fill="#9ccc2c"/><circle cx="14" cy="28.400" r="2.200" fill="#fff"/><circle cx="28.100" cy="28.400" r="2.200" fill="#fff"/></svg><svg class="b" style="left:2772.75px;top:744.50px;" width="40" height="40" viewBox="0 0 40 40"><rect width="40" height="40" rx="7.5" fill="#5bc8e6"/><g transform="translate(20 20.100)"><path d="M-2.900 -10 L-2.300 -16.100 H2.300 L2.900 -10 Z" fill="#fff" transform="rotate(0)"/><path d="M-2.900 -10 L-2.300 -16.100 H2.300 L2.900 -10 Z" fill="#fff" transform="rotate(45)"/><path d="M-2.900 -10 L-2.300 -16.100 H2.300 L2.900 -10 Z" fill="#fff" transform="rotate(90)"/><path d="M-2.900 -10 L-2.300 -16.100 H2.300 L2.900 -10 Z" fill="#fff" transform="rotate(135)"/><path d="M-2.900 -10 L-2.300 -16.100 H2.300 L2.900 -10 Z" fill="#fff" transform="rotate(180)"/><path d="M-2.900 -10 L-2.300 -16.100 H2.300 L2.900 -10 Z" fill="#fff" transform="rotate(225)"/><path d="M-2.900 -10 L-2.300 -16.100 H2.300 L2.900 -10 Z" fill="#fff" transform="rotate(270)"/><path d="M-2.900 -10 L-2.300 -16.100 H2.300 L2.900 -10 Z" fill="#fff" transform="rotate(315)"/><circle r="11.600" fill="#fff"/><circle r="5.700" fill="#5bc8e6"/></g></svg><svg class="b" style="left:2894.75px;top:744.50px;" width="40" height="40" viewBox="0 0 40 40"><rect width="40" height="40" rx="7.5" fill="#b1b3b5"/><path d="M11.500 22 L27.500 5.800 L35 12.200 L19 28.500 Z" fill="none" stroke="#fff" stroke-width="2.500"/><path d="M4.300 25.500 V35.800 H17.500 Z" fill="#fff"/></svg><svg class="b" style="left:2942.75px;top:744.50px;" width="40" height="40" viewBox="0 0 40 40"><rect width="40" height="40" rx="7.5" fill="#b1b3b5"/><path d="M7.300 8 L32.200 33.300 M32.200 8 L7.300 33.300" stroke="#ff0d0d" stroke-width="5.200"/></svg><svg class="b" style="left:2990.75px;top:744.50px;overflow:hidden;" width="40" height="40" viewBox="0 0 40 40"><path d="M0 29 V7.500 Q0 0 7.500 0 H30" fill="none" stroke="#b1b3b5" stroke-width="8" opacity=".9"/><path d="M10.500 9.500 H40 V32.500 Q40 40 32.500 40 H10.500 Z" fill="#b1b3b5"/></svg><svg class="b" style="left:3038.75px;top:744.50px;" width="40" height="40" viewBox="0 0 40 40"><rect width="40" height="40" rx="7.5" fill="#b1b3b5"/><text x="20.700" y="29.300" font-family="Liberation Sans" font-weight="bold" font-size="22.800" text-anchor="middle" fill="#fff" textLength="34" lengthAdjust="spacingAndGlyphs">PDF</text></svg><svg class="b" style="left:3086.75px;top:744.50px;" width="40" height="40" viewBox="0 0 40 40"><path d="M0 4.500 H16.500 L31 19.500 L18.500 34.500 L0 17 Z" fill="#b1b3b5"/><circle cx="7.500" cy="11.500" r="2.800" fill="#fff"/><path d="M21.500 4.500 L37.500 20.500 L24 34.500" fill="none" stroke="#b1b3b5" stroke-width="3.200"/></svg><div class="b" style="left:24.00px;top:800.00px;width:3143.50px;height:72.00px;background:#f0f0f0;"></div><div class="b" style="left:24.00px;top:800.00px;width:80.00px;height:72.00px;background:#eeeeee;"></div><div class="b" style="left:104.00px;top:800.00px;width:77.00px;height:72.00px;background:#efefef;"></div><svg class="b" style="left:50.00px;top:828.00px;" width="28" height="18" viewBox="0 0 28 18"><path d="M3.400 3.600 L13.800 13.400 L24.200 3.600" fill="none" stroke="#6c6c6c" stroke-width="3.500" stroke-linecap="butt" stroke-linejoin="miter"/></svg><div class="b" style="left:125.25px;top:824.20px;width:24.00px;height:24.00px;background:#fff;border:1.5px solid #b9b9b9;border-radius:6px;box-sizing:border-box;box-shadow:inset 0 1px 2px rgba(0,0,0,.12);"></div><span class="t" style="left:199.25px;top:809.93px;font-size:22.88px;color:#404040;transform:scaleX(1.0906);-webkit-text-stroke:0.4px currentColor;">200072-1</span><div class="b" style="left:208.00px;top:832.70px;width:77.75px;height:31.60px;background:#ff0000;border-radius:10px;"></div><span class="t" style="left:221.00px;top:839.59px;font-size:20.8px;color:#fff;transform:scaleX(1.0021);-webkit-text-stroke:0.4px currentColor;">PRIO</span><div class="b" style="left:293.75px;top:832.70px;width:134.00px;height:31.60px;background:#f59e0b;border-radius:10px;"></div><span class="t" style="left:308.45px;top:839.59px;font-size:20.8px;color:#000;transform:scaleX(1.0840);-webkit-text-stroke:0.4px currentColor;">Ausliefern!</span><span class="t" style="left:527.30px;top:825.93px;font-size:22.88px;color:#404040;transform:scaleX(1.1197);-webkit-text-stroke:0.4px currentColor;">30.06.2019</span><span class="t" style="left:764.13px;top:825.93px;font-size:22.88px;color:#404040;transform:scaleX(1.1007);-webkit-text-stroke:0.4px currentColor;">10000</span><span class="t" style="left:969.00px;top:825.93px;font-size:22.88px;color:#404040;transform:scaleX(1.0796);-webkit-text-stroke:0.4px currentColor;">Max Muster</span><span class="t" style="left:1107.94px;top:826.58px;font-size:22.11px;color:#0000ff;transform:scaleX(1.2865);font-weight:bold;-webkit-text-stroke:0.35px currentColor;">*</span><span class="t" style="left:1544.12px;top:825.93px;font-size:22.88px;color:#404040;transform:scaleX(1.0172);-webkit-text-stroke:0.4px currentColor;">DE</span><span class="t" style="left:1684.50px;top:825.93px;font-size:22.88px;color:#404040;transform:scaleX(1.0029);-webkit-text-stroke:0.4px currentColor;">STANDARD</span><span class="t" style="left:1848.12px;top:825.93px;font-size:22.88px;color:#404040;transform:scaleX(1.0891);-webkit-text-stroke:0.4px currentColor;">rechnung</span><span class="t" style="left:2080.92px;top:825.93px;font-size:22.88px;color:#404040;transform:scaleX(1.0883);-webkit-text-stroke:0.4px currentColor;">61.95</span><span class="t" style="left:2183.25px;top:825.93px;font-size:22.88px;color:#404040;transform:scaleX(1.0883);-webkit-text-stroke:0.4px currentColor;">61.95</span><svg class="b" style="left:2352.75px;top:816.00px;" width="40" height="40" viewBox="0 0 40 40"><rect width="40" height="40" rx="7.5" fill="#9ccc2c"/><path d="M34.6 4.900 L38.800 3.700 L39.400 5.700 L36.200 6.600 L30 23.900 H10.500 L4.700 10.200 H32.600 Z" fill="#fff"/><circle cx="11.500" cy="31.600" r="3.900" fill="#fff"/><circle cx="26.900" cy="31.600" r="3.900" fill="#fff"/></svg><svg class="b" style="left:2394.75px;top:816.00px;" width="40" height="40" viewBox="0 0 40 40"><rect width="40" height="40" rx="7.5" fill="#9ccc2c"/><rect x="8.100" y="4.500" width="23.600" height="31.600" fill="#fff"/><circle cx="7.800" cy="6.60" r="1.350" fill="#9ccc2c"/><circle cx="32" cy="6.60" r="1.350" fill="#9ccc2c"/><circle cx="7.800" cy="10.52" r="1.350" fill="#9ccc2c"/><circle cx="32" cy="10.52" r="1.350" fill="#9ccc2c"/><circle cx="7.800" cy="14.44" r="1.350" fill="#9ccc2c"/><circle cx="32" cy="14.44" r="1.350" fill="#9ccc2c"/><circle cx="7.800" cy="18.36" r="1.350" fill="#9ccc2c"/><circle cx="32" cy="18.36" r="1.350" fill="#9ccc2c"/><circle cx="7.800" cy="22.28" r="1.350" fill="#9ccc2c"/><circle cx="32" cy="22.28" r="1.350" fill="#9ccc2c"/><circle cx="7.800" cy="26.20" r="1.350" fill="#9ccc2c"/><circle cx="32" cy="26.20" r="1.350" fill="#9ccc2c"/><circle cx="7.800" cy="30.12" r="1.350" fill="#9ccc2c"/><circle cx="32" cy="30.12" r="1.350" fill="#9ccc2c"/><circle cx="7.800" cy="34.04" r="1.350" fill="#9ccc2c"/><circle cx="32" cy="34.04" r="1.350" fill="#9ccc2c"/><circle cx="11.90" cy="4.200" r="1.350" fill="#9ccc2c"/><circle cx="11.90" cy="36.400" r="1.350" fill="#9ccc2c"/><circle cx="15.90" cy="4.200" r="1.350" fill="#9ccc2c"/><circle cx="15.90" cy="36.400" r="1.350" fill="#9ccc2c"/><circle cx="19.90" cy="4.200" r="1.350" fill="#9ccc2c"/><circle cx="19.90" cy="36.400" r="1.350" fill="#9ccc2c"/><circle cx="23.90" cy="4.200" r="1.350" fill="#9ccc2c"/><circle cx="23.90" cy="36.400" r="1.350" fill="#9ccc2c"/><circle cx="27.90" cy="4.200" r="1.350" fill="#9ccc2c"/><circle cx="27.90" cy="36.400" r="1.350" fill="#9ccc2c"/><rect x="13.900" y="10.200" width="12" height="19.700" fill="#9ccc2c"/></svg><svg class="b" style="left:2436.75px;top:816.00px;" width="40" height="40" viewBox="0 0 40 40"><rect width="40" height="40" rx="7.5" fill="#f7931e"/><text x="20.700" y="34" font-family="Liberation Sans" font-weight="bold" font-size="38.500" text-anchor="middle" fill="#fff" stroke="#fff" stroke-width=".5" textLength="31.600" lengthAdjust="spacingAndGlyphs">%</text></svg><svg class="b" style="left:2478.75px;top:816.00px;" width="40" height="40" viewBox="0 0 40 40"><rect width="40" height="40" rx="7.5" fill="#9ccc2c"/><path d="M31.600 10.300 A11.600 12.400 0 1 0 31.600 30.300" fill="none" stroke="#fff" stroke-width="4.600"/><path d="M3.200 16.200 H25.500 L24.500 19.200 H3.200 Z M3.200 22.200 H24 L23 25.200 H3.200 Z" fill="#fff"/></svg><svg class="b" style="left:2520.75px;top:816.00px;" width="40" height="40" viewBox="0 0 40 40"><rect width="40" height="40" rx="7.5" fill="#9ccc2c"/><rect x="4.200" y="8.100" width="32.400" height="23.900" fill="#fff"/><rect x="10.200" y="12.600" width="20" height="3.100" fill="#9ccc2c"/><rect x="10.200" y="20.700" width="20" height="3.100" fill="#9ccc2c"/></svg><svg class="b" style="left:2562.75px;top:816.00px;" width="40" height="40" viewBox="0 0 40 40"><rect width="40" height="40" rx="7.5" fill="#9ccc2c"/><path d="M9.400 22.500 A11.800 11.800 0 1 1 20 32.250" fill="none" stroke="#fff" stroke-width="4.200"/><path d="M2.800 25.800 L16.400 18.800 L13.300 31 Z" fill="#fff"/></svg><svg class="b" style="left:2604.75px;top:816.00px;" width="40" height="40" viewBox="0 0 40 40"><rect width="40" height="40" rx="7.5" fill="#9ccc2c"/><circle cx="19.200" cy="10.200" r="6.900" fill="#fff"/><path d="M9.800 36.300 V28.600 A9.400 9.400 0 0 1 28.600 28.600 V36.300 Z" fill="#fff"/></svg><svg class="b" style="left:2646.75px;top:816.00px;" width="40" height="40" viewBox="0 0 40 40"><rect width="40" height="40" rx="7.5" fill="#9ccc2c"/><path d="M6.100 9 H10 V13.700 H12.600 V4.300 H15.500 V13.700 H24.900 V4.300 H27.900 V13.700 H30 V9 H33.900 V32 H6.100 Z" fill="#fff"/><rect x="10" y="18.400" width="20" height="9.400" fill="#9ccc2c"/></svg><svg class="b" style="left:2688.75px;top:816.00px;" width="40" height="40" viewBox="0 0 40 40"><rect width="40" height="40" rx="7.5" fill="#9ccc2c"/><rect x="6.100" y="6.400" width="28.100" height="27.800" fill="#fff"/><text x="20.150" y="29.600" font-family="Liberation Sans" font-weight="bold" font-size="29" text-anchor="middle" fill="#9ccc2c" stroke="#9ccc2c" stroke-width=".6" textLength="21.300" lengthAdjust="spacingAndGlyphs">$</text></svg><svg class="b" style="left:2730.75px;top:816.00px;" width="40" height="40" viewBox="0 0 40 40"><rect width="40" height="40" rx="7.5" fill="#9ccc2c"/><path d="M4.200 27.800 V10.200 H24.700 L37.900 21.800 V27.800 Z" fill="#fff"/><circle cx="14" cy="28.200" r="4.700" fill="#9ccc2c"/><circle cx="28.100" cy="28.200" r="4.700" fill="#9ccc2c"/><circle cx="14" cy="28.400" r="2.200" fill="#fff"/><circle cx="28.100" cy="28.400" r="2.200" fill="#fff"/></svg><svg class="b" style="left:2772.75px;top:816.00px;" width="40" height="40" viewBox="0 0 40 40"><rect width="40" height="40" rx="7.5" fill="#9ccc2c"/><path d="M7 21.500 L16 31 L33 6.500" fill="none" stroke="#fff" stroke-width="4"/></svg><svg class="b" style="left:2894.75px;top:816.00px;" width="40" height="40" viewBox="0 0 40 40"><rect width="40" height="40" rx="7.5" fill="#b1b3b5"/><path d="M11.500 22 L27.500 5.800 L35 12.200 L19 28.500 Z" fill="none" stroke="#fff" stroke-width="2.500"/><path d="M4.300 25.500 V35.800 H17.500 Z" fill="#fff"/></svg><svg class="b" style="left:2942.75px;top:816.00px;" width="40" height="40" viewBox="0 0 40 40"><rect width="40" height="40" rx="7.5" fill="#b1b3b5"/><path d="M7.300 8 L32.200 33.300 M32.200 8 L7.300 33.300" stroke="#ff0d0d" stroke-width="5.200"/></svg><svg class="b" style="left:2990.75px;top:816.00px;overflow:hidden;" width="40" height="40" viewBox="0 0 40 40"><path d="M0 29 V7.500 Q0 0 7.500 0 H30" fill="none" stroke="#b1b3b5" stroke-width="8" opacity=".9"/><path d="M10.500 9.500 H40 V32.500 Q40 40 32.500 40 H10.500 Z" fill="#b1b3b5"/></svg><svg class="b" style="left:3038.75px;top:816.00px;" width="40" height="40" viewBox="0 0 40 40"><rect width="40" height="40" rx="7.5" fill="#b1b3b5"/><text x="20.700" y="29.300" font-family="Liberation Sans" font-weight="bold" font-size="22.800" text-anchor="middle" fill="#fff" textLength="34" lengthAdjust="spacingAndGlyphs">PDF</text></svg><svg class="b" style="left:3086.75px;top:816.00px;" width="40" height="40" viewBox="0 0 40 40"><path d="M0 4.500 H16.500 L31 19.500 L18.500 34.500 L0 17 Z" fill="#b1b3b5"/><circle cx="7.500" cy="11.500" r="2.800" fill="#fff"/><path d="M21.500 4.500 L37.500 20.500 L24 34.500" fill="none" stroke="#b1b3b5" stroke-width="3.200"/></svg><svg class="b" style="left:50.00px;top:900.00px;" width="28" height="18" viewBox="0 0 28 18"><path d="M3.400 3.600 L13.800 13.400 L24.200 3.600" fill="none" stroke="#6c6c6c" stroke-width="3.500" stroke-linecap="butt" stroke-linejoin="miter"/></svg><div class="b" style="left:125.25px;top:896.20px;width:24.00px;height:24.00px;background:#fff;border:1.5px solid #b9b9b9;border-radius:6px;box-sizing:border-box;box-shadow:inset 0 1px 2px rgba(0,0,0,.12);"></div><span class="t" style="left:199.25px;top:897.93px;font-size:22.88px;color:#404040;transform:scaleX(1.0902);-webkit-text-stroke:0.4px currentColor;">200072</span><span class="t" style="left:527.30px;top:897.93px;font-size:22.88px;color:#404040;transform:scaleX(1.1197);-webkit-text-stroke:0.4px currentColor;">30.06.2019</span><span class="t" style="left:764.13px;top:897.93px;font-size:22.88px;color:#404040;transform:scaleX(1.1007);-webkit-text-stroke:0.4px currentColor;">10000</span><span class="t" style="left:969.00px;top:897.93px;font-size:22.88px;color:#404040;transform:scaleX(1.0796);-webkit-text-stroke:0.4px currentColor;">Max Muster</span><span class="t" style="left:1544.12px;top:897.93px;font-size:22.88px;color:#404040;transform:scaleX(1.0172);-webkit-text-stroke:0.4px currentColor;">DE</span><span class="t" style="left:1684.50px;top:897.93px;font-size:22.88px;color:#404040;transform:scaleX(1.0029);-webkit-text-stroke:0.4px currentColor;">STANDARD</span><span class="t" style="left:1848.12px;top:897.93px;font-size:22.88px;color:#404040;transform:scaleX(1.0891);-webkit-text-stroke:0.4px currentColor;">rechnung</span><span class="t" style="left:2066.66px;top:897.93px;font-size:22.88px;color:#404040;transform:scaleX(1.0932);-webkit-text-stroke:0.4px currentColor;">123.90</span><span class="t" style="left:2182.64px;top:897.93px;font-size:22.88px;color:#404040;transform:scaleX(1.0932);-webkit-text-stroke:0.4px currentColor;">123.90</span><svg class="b" style="left:2352.75px;top:888.00px;" width="40" height="40" viewBox="0 0 40 40"><rect width="40" height="40" rx="7.5" fill="#9ccc2c"/><path d="M34.6 4.900 L38.800 3.700 L39.400 5.700 L36.200 6.600 L30 23.900 H10.500 L4.700 10.200 H32.600 Z" fill="#fff"/><circle cx="11.500" cy="31.600" r="3.900" fill="#fff"/><circle cx="26.900" cy="31.600" r="3.900" fill="#fff"/></svg><svg class="b" style="left:2394.75px;top:888.00px;" width="40" height="40" viewBox="0 0 40 40"><rect width="40" height="40" rx="7.5" fill="#9ccc2c"/><rect x="8.100" y="4.500" width="23.600" height="31.600" fill="#fff"/><circle cx="7.800" cy="6.60" r="1.350" fill="#9ccc2c"/><circle cx="32" cy="6.60" r="1.350" fill="#9ccc2c"/><circle cx="7.800" cy="10.52" r="1.350" fill="#9ccc2c"/><circle cx="32" cy="10.52" r="1.350" fill="#9ccc2c"/><circle cx="7.800" cy="14.44" r="1.350" fill="#9ccc2c"/><circle cx="32" cy="14.44" r="1.350" fill="#9ccc2c"/><circle cx="7.800" cy="18.36" r="1.350" fill="#9ccc2c"/><circle cx="32" cy="18.36" r="1.350" fill="#9ccc2c"/><circle cx="7.800" cy="22.28" r="1.350" fill="#9ccc2c"/><circle cx="32" cy="22.28" r="1.350" fill="#9ccc2c"/><circle cx="7.800" cy="26.20" r="1.350" fill="#9ccc2c"/><circle cx="32" cy="26.20" r="1.350" fill="#9ccc2c"/><circle cx="7.800" cy="30.12" r="1.350" fill="#9ccc2c"/><circle cx="32" cy="30.12" r="1.350" fill="#9ccc2c"/><circle cx="7.800" cy="34.04" r="1.350" fill="#9ccc2c"/><circle cx="32" cy="34.04" r="1.350" fill="#9ccc2c"/><circle cx="11.90" cy="4.200" r="1.350" fill="#9ccc2c"/><circle cx="11.90" cy="36.400" r="1.350" fill="#9ccc2c"/><circle cx="15.90" cy="4.200" r="1.350" fill="#9ccc2c"/><circle cx="15.90" cy="36.400" r="1.350" fill="#9ccc2c"/><circle cx="19.90" cy="4.200" r="1.350" fill="#9ccc2c"/><circle cx="19.90" cy="36.400" r="1.350" fill="#9ccc2c"/><circle cx="23.90" cy="4.200" r="1.350" fill="#9ccc2c"/><circle cx="23.90" cy="36.400" r="1.350" fill="#9ccc2c"/><circle cx="27.90" cy="4.200" r="1.350" fill="#9ccc2c"/><circle cx="27.90" cy="36.400" r="1.350" fill="#9ccc2c"/><rect x="13.900" y="10.200" width="12" height="19.700" fill="#9ccc2c"/></svg><svg class="b" style="left:2436.75px;top:888.00px;" width="40" height="40" viewBox="0 0 40 40"><rect width="40" height="40" rx="7.5" fill="#f7931e"/><text x="20.700" y="34" font-family="Liberation Sans" font-weight="bold" font-size="38.500" text-anchor="middle" fill="#fff" stroke="#fff" stroke-width=".5" textLength="31.600" lengthAdjust="spacingAndGlyphs">%</text></svg><svg class="b" style="left:2478.75px;top:888.00px;" width="40" height="40" viewBox="0 0 40 40"><rect width="40" height="40" rx="7.5" fill="#9ccc2c"/><path d="M31.600 10.300 A11.600 12.400 0 1 0 31.600 30.300" fill="none" stroke="#fff" stroke-width="4.600"/><path d="M3.200 16.200 H25.500 L24.500 19.200 H3.200 Z M3.200 22.200 H24 L23 25.200 H3.200 Z" fill="#fff"/></svg><svg class="b" style="left:2520.75px;top:888.00px;" width="40" height="40" viewBox="0 0 40 40"><rect width="40" height="40" rx="7.5" fill="#9ccc2c"/><rect x="4.200" y="8.100" width="32.400" height="23.900" fill="#fff"/><rect x="10.200" y="12.600" width="20" height="3.100" fill="#9ccc2c"/><rect x="10.200" y="20.700" width="20" height="3.100" fill="#9ccc2c"/></svg><svg class="b" style="left:2562.75px;top:888.00px;" width="40" height="40" viewBox="0 0 40 40"><rect width="40" height="40" rx="7.5" fill="#9ccc2c"/><path d="M9.400 22.500 A11.800 11.800 0 1 1 20 32.250" fill="none" stroke="#fff" stroke-width="4.200"/><path d="M2.800 25.800 L16.400 18.800 L13.300 31 Z" fill="#fff"/></svg><svg class="b" style="left:2604.75px;top:888.00px;" width="40" height="40" viewBox="0 0 40 40"><rect width="40" height="40" rx="7.5" fill="#9ccc2c"/><circle cx="19.200" cy="10.200" r="6.900" fill="#fff"/><path d="M9.800 36.300 V28.600 A9.400 9.400 0 0 1 28.600 28.600 V36.300 Z" fill="#fff"/></svg><svg class="b" style="left:2646.75px;top:888.00px;" width="40" height="40" viewBox="0 0 40 40"><rect width="40" height="40" rx="7.5" fill="#9ccc2c"/><path d="M6.100 9 H10 V13.700 H12.600 V4.300 H15.500 V13.700 H24.900 V4.300 H27.900 V13.700 H30 V9 H33.900 V32 H6.100 Z" fill="#fff"/><rect x="10" y="18.400" width="20" height="9.400" fill="#9ccc2c"/></svg><svg class="b" style="left:2688.75px;top:888.00px;" width="40" height="40" viewBox="0 0 40 40"><rect width="40" height="40" rx="7.5" fill="#9ccc2c"/><rect x="6.100" y="6.400" width="28.100" height="27.800" fill="#fff"/><text x="20.150" y="29.600" font-family="Liberation Sans" font-weight="bold" font-size="29" text-anchor="middle" fill="#9ccc2c" stroke="#9ccc2c" stroke-width=".6" textLength="21.300" lengthAdjust="spacingAndGlyphs">$</text></svg><svg class="b" style="left:2730.75px;top:888.00px;" width="40" height="40" viewBox="0 0 40 40"><rect width="40" height="40" rx="7.5" fill="#9ccc2c"/><path d="M4.200 27.800 V10.200 H24.700 L37.900 21.800 V27.800 Z" fill="#fff"/><circle cx="14" cy="28.200" r="4.700" fill="#9ccc2c"/><circle cx="28.100" cy="28.200" r="4.700" fill="#9ccc2c"/><circle cx="14" cy="28.400" r="2.200" fill="#fff"/><circle cx="28.100" cy="28.400" r="2.200" fill="#fff"/></svg><svg class="b" style="left:2772.75px;top:888.00px;" width="40" height="40" viewBox="0 0 40 40"><rect width="40" height="40" rx="7.5" fill="#9ccc2c"/><path d="M7 21.500 L16 31 L33 6.500" fill="none" stroke="#fff" stroke-width="4"/></svg><svg class="b" style="left:2894.75px;top:888.00px;" width="40" height="40" viewBox="0 0 40 40"><rect width="40" height="40" rx="7.5" fill="#b1b3b5"/><path d="M11.500 22 L27.500 5.800 L35 12.200 L19 28.500 Z" fill="none" stroke="#fff" stroke-width="2.500"/><path d="M4.300 25.500 V35.800 H17.500 Z" fill="#fff"/></svg><svg class="b" style="left:2942.75px;top:888.00px;" width="40" height="40" viewBox="0 0 40 40"><rect width="40" height="40" rx="7.5" fill="#b1b3b5"/><path d="M7.300 8 L32.200 33.300 M32.200 8 L7.300 33.300" stroke="#ff0d0d" stroke-width="5.200"/></svg><svg class="b" style="left:2990.75px;top:888.00px;overflow:hidden;" width="40" height="40" viewBox="0 0 40 40"><path d="M0 29 V7.500 Q0 0 7.500 0 H30" fill="none" stroke="#b1b3b5" stroke-width="8" opacity=".9"/><path d="M10.500 9.500 H40 V32.500 Q40 40 32.500 40 H10.500 Z" fill="#b1b3b5"/></svg><svg class="b" style="left:3038.75px;top:888.00px;" width="40" height="40" viewBox="0 0 40 40"><rect width="40" height="40" rx="7.5" fill="#b1b3b5"/><text x="20.700" y="29.300" font-family="Liberation Sans" font-weight="bold" font-size="22.800" text-anchor="middle" fill="#fff" textLength="34" lengthAdjust="spacingAndGlyphs">PDF</text></svg><svg class="b" style="left:3086.75px;top:888.00px;" width="40" height="40" viewBox="0 0 40 40"><path d="M0 4.500 H16.500 L31 19.500 L18.500 34.500 L0 17 Z" fill="#b1b3b5"/><circle cx="7.500" cy="11.500" r="2.800" fill="#fff"/><path d="M21.500 4.500 L37.500 20.500 L24 34.500" fill="none" stroke="#b1b3b5" stroke-width="3.200"/></svg><div class="b" style="left:24.00px;top:944.00px;width:3143.50px;height:71.00px;background:#f0f0f0;"></div><div class="b" style="left:24.00px;top:944.00px;width:80.00px;height:71.00px;background:#eeeeee;"></div><div class="b" style="left:104.00px;top:944.00px;width:77.00px;height:71.00px;background:#efefef;"></div><svg class="b" style="left:50.00px;top:971.50px;" width="28" height="18" viewBox="0 0 28 18"><path d="M3.400 3.600 L13.800 13.400 L24.200 3.600" fill="none" stroke="#6c6c6c" stroke-width="3.500" stroke-linecap="butt" stroke-linejoin="miter"/></svg><div class="b" style="left:125.25px;top:967.70px;width:24.00px;height:24.00px;background:#fff;border:1.5px solid #b9b9b9;border-radius:6px;box-sizing:border-box;box-shadow:inset 0 1px 2px rgba(0,0,0,.12);"></div><span class="t" style="left:199.25px;top:953.93px;font-size:22.88px;color:#404040;transform:scaleX(1.0906);-webkit-text-stroke:0.4px currentColor;">200071-1</span><div class="b" style="left:208.00px;top:976.70px;width:219.20px;height:31.60px;background:#ffcc00;border-radius:10px;"></div><span class="t" style="left:220.90px;top:983.59px;font-size:20.8px;color:#000;transform:scaleX(1.0590);-webkit-text-stroke:0.4px currentColor;">DHL Adresse falsch</span><span class="t" style="left:527.30px;top:969.43px;font-size:22.88px;color:#404040;transform:scaleX(1.1197);-webkit-text-stroke:0.4px currentColor;">30.06.2019</span><span class="t" style="left:764.13px;top:969.43px;font-size:22.88px;color:#404040;transform:scaleX(1.1007);-webkit-text-stroke:0.4px currentColor;">10000</span><span class="t" style="left:969.00px;top:969.43px;font-size:22.88px;color:#404040;transform:scaleX(1.0796);-webkit-text-stroke:0.4px currentColor;">Max Muster</span><span class="t" style="left:1107.94px;top:970.08px;font-size:22.11px;color:#0000ff;transform:scaleX(1.2865);font-weight:bold;-webkit-text-stroke:0.35px currentColor;">*</span><span class="t" style="left:1544.12px;top:969.43px;font-size:22.88px;color:#404040;transform:scaleX(1.0172);-webkit-text-stroke:0.4px currentColor;">DE</span><span class="t" style="left:1684.50px;top:969.43px;font-size:22.88px;color:#404040;transform:scaleX(1.0029);-webkit-text-stroke:0.4px currentColor;">STANDARD</span><span class="t" style="left:1848.12px;top:969.43px;font-size:22.88px;color:#404040;transform:scaleX(1.0891);-webkit-text-stroke:0.4px currentColor;">rechnung</span><span class="t" style="left:2080.92px;top:969.43px;font-size:22.88px;color:#404040;transform:scaleX(1.0883);-webkit-text-stroke:0.4px currentColor;">61.95</span><span class="t" style="left:2183.25px;top:969.43px;font-size:22.88px;color:#404040;transform:scaleX(1.0883);-webkit-text-stroke:0.4px currentColor;">61.95</span><svg class="b" style="left:2352.75px;top:959.50px;" width="40" height="40" viewBox="0 0 40 40"><rect width="40" height="40" rx="7.5" fill="#9ccc2c"/><path d="M34.6 4.900 L38.800 3.700 L39.400 5.700 L36.200 6.600 L30 23.900 H10.500 L4.700 10.200 H32.600 Z" fill="#fff"/><circle cx="11.500" cy="31.600" r="3.900" fill="#fff"/><circle cx="26.900" cy="31.600" r="3.900" fill="#fff"/></svg><svg class="b" style="left:2394.75px;top:959.50px;" width="40" height="40" viewBox="0 0 40 40"><rect width="40" height="40" rx="7.5" fill="#9ccc2c"/><rect x="8.100" y="4.500" width="23.600" height="31.600" fill="#fff"/><circle cx="7.800" cy="6.60" r="1.350" fill="#9ccc2c"/><circle cx="32" cy="6.60" r="1.350" fill="#9ccc2c"/><circle cx="7.800" cy="10.52" r="1.350" fill="#9ccc2c"/><circle cx="32" cy="10.52" r="1.350" fill="#9ccc2c"/><circle cx="7.800" cy="14.44" r="1.350" fill="#9ccc2c"/><circle cx="32" cy="14.44" r="1.350" fill="#9ccc2c"/><circle cx="7.800" cy="18.36" r="1.350" fill="#9ccc2c"/><circle cx="32" cy="18.36" r="1.350" fill="#9ccc2c"/><circle cx="7.800" cy="22.28" r="1.350" fill="#9ccc2c"/><circle cx="32" cy="22.28" r="1.350" fill="#9ccc2c"/><circle cx="7.800" cy="26.20" r="1.350" fill="#9ccc2c"/><circle cx="32" cy="26.20" r="1.350" fill="#9ccc2c"/><circle cx="7.800" cy="30.12" r="1.350" fill="#9ccc2c"/><circle cx="32" cy="30.12" r="1.350" fill="#9ccc2c"/><circle cx="7.800" cy="34.04" r="1.350" fill="#9ccc2c"/><circle cx="32" cy="34.04" r="1.350" fill="#9ccc2c"/><circle cx="11.90" cy="4.200" r="1.350" fill="#9ccc2c"/><circle cx="11.90" cy="36.400" r="1.350" fill="#9ccc2c"/><circle cx="15.90" cy="4.200" r="1.350" fill="#9ccc2c"/><circle cx="15.90" cy="36.400" r="1.350" fill="#9ccc2c"/><circle cx="19.90" cy="4.200" r="1.350" fill="#9ccc2c"/><circle cx="19.90" cy="36.400" r="1.350" fill="#9ccc2c"/><circle cx="23.90" cy="4.200" r="1.350" fill="#9ccc2c"/><circle cx="23.90" cy="36.400" r="1.350" fill="#9ccc2c"/><circle cx="27.90" cy="4.200" r="1.350" fill="#9ccc2c"/><circle cx="27.90" cy="36.400" r="1.350" fill="#9ccc2c"/><rect x="13.900" y="10.200" width="12" height="19.700" fill="#9ccc2c"/></svg><svg class="b" style="left:2436.75px;top:959.50px;" width="40" height="40" viewBox="0 0 40 40"><rect width="40" height="40" rx="7.5" fill="#f7931e"/><text x="20.700" y="34" font-family="Liberation Sans" font-weight="bold" font-size="38.500" text-anchor="middle" fill="#fff" stroke="#fff" stroke-width=".5" textLength="31.600" lengthAdjust="spacingAndGlyphs">%</text></svg><svg class="b" style="left:2478.75px;top:959.50px;" width="40" height="40" viewBox="0 0 40 40"><rect width="40" height="40" rx="7.5" fill="#9ccc2c"/><path d="M31.600 10.300 A11.600 12.400 0 1 0 31.600 30.300" fill="none" stroke="#fff" stroke-width="4.600"/><path d="M3.200 16.200 H25.500 L24.500 19.200 H3.200 Z M3.200 22.200 H24 L23 25.200 H3.200 Z" fill="#fff"/></svg><svg class="b" style="left:2520.75px;top:959.50px;" width="40" height="40" viewBox="0 0 40 40"><rect width="40" height="40" rx="7.5" fill="#9ccc2c"/><rect x="4.200" y="8.100" width="32.400" height="23.900" fill="#fff"/><rect x="10.200" y="12.600" width="20" height="3.100" fill="#9ccc2c"/><rect x="10.200" y="20.700" width="20" height="3.100" fill="#9ccc2c"/></svg><svg class="b" style="left:2562.75px;top:959.50px;" width="40" height="40" viewBox="0 0 40 40"><rect width="40" height="40" rx="7.5" fill="#9ccc2c"/><path d="M9.400 22.500 A11.800 11.800 0 1 1 20 32.250" fill="none" stroke="#fff" stroke-width="4.200"/><path d="M2.800 25.800 L16.400 18.800 L13.300 31 Z" fill="#fff"/></svg><svg class="b" style="left:2604.75px;top:959.50px;" width="40" height="40" viewBox="0 0 40 40"><rect width="40" height="40" rx="7.5" fill="#9ccc2c"/><circle cx="19.200" cy="10.200" r="6.900" fill="#fff"/><path d="M9.800 36.300 V28.600 A9.400 9.400 0 0 1 28.600 28.600 V36.300 Z" fill="#fff"/></svg><svg class="b" style="left:2646.75px;top:959.50px;" width="40" height="40" viewBox="0 0 40 40"><rect width="40" height="40" rx="7.5" fill="#9ccc2c"/><path d="M6.100 9 H10 V13.700 H12.600 V4.300 H15.500 V13.700 H24.900 V4.300 H27.900 V13.700 H30 V9 H33.900 V32 H6.100 Z" fill="#fff"/><rect x="10" y="18.400" width="20" height="9.400" fill="#9ccc2c"/></svg><svg class="b" style="left:2688.75px;top:959.50px;" width="40" height="40" viewBox="0 0 40 40"><rect width="40" height="40" rx="7.5" fill="#9ccc2c"/><rect x="6.100" y="6.400" width="28.100" height="27.800" fill="#fff"/><text x="20.150" y="29.600" font-family="Liberation Sans" font-weight="bold" font-size="29" text-anchor="middle" fill="#9ccc2c" stroke="#9ccc2c" stroke-width=".6" textLength="21.300" lengthAdjust="spacingAndGlyphs">$</text></svg><svg class="b" style="left:2730.75px;top:959.50px;" width="40" height="40" viewBox="0 0 40 40"><rect width="40" height="40" rx="7.5" fill="#9ccc2c"/><path d="M4.200 27.800 V10.200 H24.700 L37.900 21.800 V27.800 Z" fill="#fff"/><circle cx="14" cy="28.200" r="4.700" fill="#9ccc2c"/><circle cx="28.100" cy="28.200" r="4.700" fill="#9ccc2c"/><circle cx="14" cy="28.400" r="2.200" fill="#fff"/><circle cx="28.100" cy="28.400" r="2.200" fill="#fff"/></svg><svg class="b" style="left:2772.75px;top:959.50px;" width="40" height="40" viewBox="0 0 40 40"><rect width="40" height="40" rx="7.5" fill="#9ccc2c"/><path d="M7 21.500 L16 31 L33 6.500" fill="none" stroke="#fff" stroke-width="4"/></svg><svg class="b" style="left:2894.75px;top:959.50px;" width="40" height="40" viewBox="0 0 40 40"><rect width="40" height="40" rx="7.5" fill="#b1b3b5"/><path d="M11.500 22 L27.500 5.800 L35 12.200 L19 28.500 Z" fill="none" stroke="#fff" stroke-width="2.500"/><path d="M4.300 25.500 V35.800 H17.500 Z" fill="#fff"/></svg><svg class="b" style="left:2942.75px;top:959.50px;" width="40" height="40" viewBox="0 0 40 40"><rect width="40" height="40" rx="7.5" fill="#b1b3b5"/><path d="M7.300 8 L32.200 33.300 M32.200 8 L7.300 33.300" stroke="#ff0d0d" stroke-width="5.200"/></svg><svg class="b" style="left:2990.75px;top:959.50px;overflow:hidden;" width="40" height="40" viewBox="0 0 40 40"><path d="M0 29 V7.500 Q0 0 7.500 0 H30" fill="none" stroke="#b1b3b5" stroke-width="8" opacity=".9"/><path d="M10.500 9.500 H40 V32.500 Q40 40 32.500 40 H10.500 Z" fill="#b1b3b5"/></svg><svg class="b" style="left:3038.75px;top:959.50px;" width="40" height="40" viewBox="0 0 40 40"><rect width="40" height="40" rx="7.5" fill="#b1b3b5"/><text x="20.700" y="29.300" font-family="Liberation Sans" font-weight="bold" font-size="22.800" text-anchor="middle" fill="#fff" textLength="34" lengthAdjust="spacingAndGlyphs">PDF</text></svg><svg class="b" style="left:3086.75px;top:959.50px;" width="40" height="40" viewBox="0 0 40 40"><path d="M0 4.500 H16.500 L31 19.500 L18.500 34.500 L0 17 Z" fill="#b1b3b5"/><circle cx="7.500" cy="11.500" r="2.800" fill="#fff"/><path d="M21.500 4.500 L37.500 20.500 L24 34.500" fill="none" stroke="#b1b3b5" stroke-width="3.200"/></svg><svg class="b" style="left:50.00px;top:1043.00px;" width="28" height="18" viewBox="0 0 28 18"><path d="M3.400 3.600 L13.800 13.400 L24.200 3.600" fill="none" stroke="#6c6c6c" stroke-width="3.500" stroke-linecap="butt" stroke-linejoin="miter"/></svg><div class="b" style="left:125.25px;top:1039.20px;width:24.00px;height:24.00px;background:#fff;border:1.5px solid #b9b9b9;border-radius:6px;box-sizing:border-box;box-shadow:inset 0 1px 2px rgba(0,0,0,.12);"></div><span class="t" style="left:199.24px;top:1040.93px;font-size:22.88px;color:#404040;transform:scaleX(1.0922);-webkit-text-stroke:0.4px currentColor;">200071</span><span class="t" style="left:527.30px;top:1040.93px;font-size:22.88px;color:#404040;transform:scaleX(1.1197);-webkit-text-stroke:0.4px currentColor;">30.06.2019</span><span class="t" style="left:764.13px;top:1040.93px;font-size:22.88px;color:#404040;transform:scaleX(1.1007);-webkit-text-stroke:0.4px currentColor;">10000</span><span class="t" style="left:969.00px;top:1040.93px;font-size:22.88px;color:#404040;transform:scaleX(1.0796);-webkit-text-stroke:0.4px currentColor;">Max Muster</span><span class="t" style="left:1544.12px;top:1040.93px;font-size:22.88px;color:#404040;transform:scaleX(1.0172);-webkit-text-stroke:0.4px currentColor;">DE</span><span class="t" style="left:1684.50px;top:1040.93px;font-size:22.88px;color:#404040;transform:scaleX(1.0029);-webkit-text-stroke:0.4px currentColor;">STANDARD</span><span class="t" style="left:1848.12px;top:1040.93px;font-size:22.88px;color:#404040;transform:scaleX(1.0891);-webkit-text-stroke:0.4px currentColor;">rechnung</span><span class="t" style="left:2066.66px;top:1040.93px;font-size:22.88px;color:#404040;transform:scaleX(1.0932);-webkit-text-stroke:0.4px currentColor;">123.90</span><span class="t" style="left:2182.64px;top:1040.93px;font-size:22.88px;color:#404040;transform:scaleX(1.0932);-webkit-text-stroke:0.4px currentColor;">123.90</span><svg class="b" style="left:2352.75px;top:1031.00px;" width="40" height="40" viewBox="0 0 40 40"><rect width="40" height="40" rx="7.5" fill="#9ccc2c"/><path d="M34.6 4.900 L38.800 3.700 L39.400 5.700 L36.200 6.600 L30 23.900 H10.500 L4.700 10.200 H32.600 Z" fill="#fff"/><circle cx="11.500" cy="31.600" r="3.900" fill="#fff"/><circle cx="26.900" cy="31.600" r="3.900" fill="#fff"/></svg><svg class="b" style="left:2394.75px;top:1031.00px;" width="40" height="40" viewBox="0 0 40 40"><rect width="40" height="40" rx="7.5" fill="#9ccc2c"/><rect x="8.100" y="4.500" width="23.600" height="31.600" fill="#fff"/><circle cx="7.800" cy="6.60" r="1.350" fill="#9ccc2c"/><circle cx="32" cy="6.60" r="1.350" fill="#9ccc2c"/><circle cx="7.800" cy="10.52" r="1.350" fill="#9ccc2c"/><circle cx="32" cy="10.52" r="1.350" fill="#9ccc2c"/><circle cx="7.800" cy="14.44" r="1.350" fill="#9ccc2c"/><circle cx="32" cy="14.44" r="1.350" fill="#9ccc2c"/><circle cx="7.800" cy="18.36" r="1.350" fill="#9ccc2c"/><circle cx="32" cy="18.36" r="1.350" fill="#9ccc2c"/><circle cx="7.800" cy="22.28" r="1.350" fill="#9ccc2c"/><circle cx="32" cy="22.28" r="1.350" fill="#9ccc2c"/><circle cx="7.800" cy="26.20" r="1.350" fill="#9ccc2c"/><circle cx="32" cy="26.20" r="1.350" fill="#9ccc2c"/><circle cx="7.800" cy="30.12" r="1.350" fill="#9ccc2c"/><circle cx="32" cy="30.12" r="1.350" fill="#9ccc2c"/><circle cx="7.800" cy="34.04" r="1.350" fill="#9ccc2c"/><circle cx="32" cy="34.04" r="1.350" fill="#9ccc2c"/><circle cx="11.90" cy="4.200" r="1.350" fill="#9ccc2c"/><circle cx="11.90" cy="36.400" r="1.350" fill="#9ccc2c"/><circle cx="15.90" cy="4.200" r="1.350" fill="#9ccc2c"/><circle cx="15.90" cy="36.400" r="1.350" fill="#9ccc2c"/><circle cx="19.90" cy="4.200" r="1.350" fill="#9ccc2c"/><circle cx="19.90" cy="36.400" r="1.350" fill="#9ccc2c"/><circle cx="23.90" cy="4.200" r="1.350" fill="#9ccc2c"/><circle cx="23.90" cy="36.400" r="1.350" fill="#9ccc2c"/><circle cx="27.90" cy="4.200" r="1.350" fill="#9ccc2c"/><circle cx="27.90" cy="36.400" r="1.350" fill="#9ccc2c"/><rect x="13.900" y="10.200" width="12" height="19.700" fill="#9ccc2c"/></svg><svg class="b" style="left:2436.75px;top:1031.00px;" width="40" height="40" viewBox="0 0 40 40"><rect width="40" height="40" rx="7.5" fill="#f7931e"/><text x="20.700" y="34" font-family="Liberation Sans" font-weight="bold" font-size="38.500" text-anchor="middle" fill="#fff" stroke="#fff" stroke-width=".5" textLength="31.600" lengthAdjust="spacingAndGlyphs">%</text></svg><svg class="b" style="left:2478.75px;top:1031.00px;" width="40" height="40" viewBox="0 0 40 40"><rect width="40" height="40" rx="7.5" fill="#9ccc2c"/><path d="M31.600 10.300 A11.600 12.400 0 1 0 31.600 30.300" fill="none" stroke="#fff" stroke-width="4.600"/><path d="M3.200 16.200 H25.500 L24.500 19.200 H3.200 Z M3.200 22.200 H24 L23 25.200 H3.200 Z" fill="#fff"/></svg><svg class="b" style="left:2520.75px;top:1031.00px;" width="40" height="40" viewBox="0 0 40 40"><rect width="40" height="40" rx="7.5" fill="#9ccc2c"/><rect x="4.200" y="8.100" width="32.400" height="23.900" fill="#fff"/><rect x="10.200" y="12.600" width="20" height="3.100" fill="#9ccc2c"/><rect x="10.200" y="20.700" width="20" height="3.100" fill="#9ccc2c"/></svg><svg class="b" style="left:2562.75px;top:1031.00px;" width="40" height="40" viewBox="0 0 40 40"><rect width="40" height="40" rx="7.5" fill="#9ccc2c"/><path d="M9.400 22.500 A11.800 11.800 0 1 1 20 32.250" fill="none" stroke="#fff" stroke-width="4.200"/><path d="M2.800 25.800 L16.400 18.800 L13.300 31 Z" fill="#fff"/></svg><svg class="b" style="left:2604.75px;top:1031.00px;" width="40" height="40" viewBox="0 0 40 40"><rect width="40" height="40" rx="7.5" fill="#9ccc2c"/><circle cx="19.200" cy="10.200" r="6.900" fill="#fff"/><path d="M9.800 36.300 V28.600 A9.400 9.400 0 0 1 28.600 28.600 V36.300 Z" fill="#fff"/></svg><svg class="b" style="left:2646.75px;top:1031.00px;" width="40" height="40" viewBox="0 0 40 40"><rect width="40" height="40" rx="7.5" fill="#9ccc2c"/><path d="M6.100 9 H10 V13.700 H12.600 V4.300 H15.500 V13.700 H24.900 V4.300 H27.900 V13.700 H30 V9 H33.900 V32 H6.100 Z" fill="#fff"/><rect x="10" y="18.400" width="20" height="9.400" fill="#9ccc2c"/></svg><svg class="b" style="left:2688.75px;top:1031.00px;" width="40" height="40" viewBox="0 0 40 40"><rect width="40" height="40" rx="7.5" fill="#9ccc2c"/><rect x="6.100" y="6.400" width="28.100" height="27.800" fill="#fff"/><text x="20.150" y="29.600" font-family="Liberation Sans" font-weight="bold" font-size="29" text-anchor="middle" fill="#9ccc2c" stroke="#9ccc2c" stroke-width=".6" textLength="21.300" lengthAdjust="spacingAndGlyphs">$</text></svg><svg class="b" style="left:2730.75px;top:1031.00px;" width="40" height="40" viewBox="0 0 40 40"><rect width="40" height="40" rx="7.5" fill="#9ccc2c"/><path d="M4.200 27.800 V10.200 H24.700 L37.900 21.800 V27.800 Z" fill="#fff"/><circle cx="14" cy="28.200" r="4.700" fill="#9ccc2c"/><circle cx="28.100" cy="28.200" r="4.700" fill="#9ccc2c"/><circle cx="14" cy="28.400" r="2.200" fill="#fff"/><circle cx="28.100" cy="28.400" r="2.200" fill="#fff"/></svg><svg class="b" style="left:2772.75px;top:1031.00px;" width="40" height="40" viewBox="0 0 40 40"><rect width="40" height="40" rx="7.5" fill="#9ccc2c"/><path d="M7 21.500 L16 31 L33 6.500" fill="none" stroke="#fff" stroke-width="4"/></svg><svg class="b" style="left:2894.75px;top:1031.00px;" width="40" height="40" viewBox="0 0 40 40"><rect width="40" height="40" rx="7.5" fill="#b1b3b5"/><path d="M11.500 22 L27.500 5.800 L35 12.200 L19 28.500 Z" fill="none" stroke="#fff" stroke-width="2.500"/><path d="M4.300 25.500 V35.800 H17.500 Z" fill="#fff"/></svg><svg class="b" style="left:2942.75px;top:1031.00px;" width="40" height="40" viewBox="0 0 40 40"><rect width="40" height="40" rx="7.5" fill="#b1b3b5"/><path d="M7.300 8 L32.200 33.300 M32.200 8 L7.300 33.300" stroke="#ff0d0d" stroke-width="5.200"/></svg><svg class="b" style="left:2990.75px;top:1031.00px;overflow:hidden;" width="40" height="40" viewBox="0 0 40 40"><path d="M0 29 V7.500 Q0 0 7.500 0 H30" fill="none" stroke="#b1b3b5" stroke-width="8" opacity=".9"/><path d="M10.500 9.500 H40 V32.500 Q40 40 32.500 40 H10.500 Z" fill="#b1b3b5"/></svg><svg class="b" style="left:3038.75px;top:1031.00px;" width="40" height="40" viewBox="0 0 40 40"><rect width="40" height="40" rx="7.5" fill="#b1b3b5"/><text x="20.700" y="29.300" font-family="Liberation Sans" font-weight="bold" font-size="22.800" text-anchor="middle" fill="#fff" textLength="34" lengthAdjust="spacingAndGlyphs">PDF</text></svg><svg class="b" style="left:3086.75px;top:1031.00px;" width="40" height="40" viewBox="0 0 40 40"><path d="M0 4.500 H16.500 L31 19.500 L18.500 34.500 L0 17 Z" fill="#b1b3b5"/><circle cx="7.500" cy="11.500" r="2.800" fill="#fff"/><path d="M21.500 4.500 L37.500 20.500 L24 34.500" fill="none" stroke="#b1b3b5" stroke-width="3.200"/></svg><div class="b" style="left:24.00px;top:1087.00px;width:3143.50px;height:71.00px;background:#f0f0f0;"></div><div class="b" style="left:24.00px;top:1087.00px;width:80.00px;height:71.00px;background:#eeeeee;"></div><div class="b" style="left:104.00px;top:1087.00px;width:77.00px;height:71.00px;background:#efefef;"></div><svg class="b" style="left:50.00px;top:1114.50px;" width="28" height="18" viewBox="0 0 28 18"><path d="M3.400 3.600 L13.800 13.400 L24.200 3.600" fill="none" stroke="#6c6c6c" stroke-width="3.500" stroke-linecap="butt" stroke-linejoin="miter"/></svg><div class="b" style="left:125.25px;top:1110.70px;width:24.00px;height:24.00px;background:#fff;border:1.5px solid #b9b9b9;border-radius:6px;box-sizing:border-box;box-shadow:inset 0 1px 2px rgba(0,0,0,.12);"></div><span class="t" style="left:199.25px;top:1096.93px;font-size:22.88px;color:#404040;transform:scaleX(1.0906);-webkit-text-stroke:0.4px currentColor;">200070-1</span><div class="b" style="left:208.00px;top:1119.70px;width:226.00px;height:31.60px;background:#838cc8;border-radius:10px;"></div><span class="t" style="left:220.86px;top:1126.59px;font-size:20.8px;color:#000;transform:scaleX(1.0849);-webkit-text-stroke:0.4px currentColor;">Lieferpapiere fehlen</span><span class="t" style="left:527.30px;top:1112.43px;font-size:22.88px;color:#404040;transform:scaleX(1.1197);-webkit-text-stroke:0.4px currentColor;">30.06.2019</span><span class="t" style="left:764.13px;top:1112.43px;font-size:22.88px;color:#404040;transform:scaleX(1.1007);-webkit-text-stroke:0.4px currentColor;">10000</span><span class="t" style="left:969.00px;top:1112.43px;font-size:22.88px;color:#404040;transform:scaleX(1.0796);-webkit-text-stroke:0.4px currentColor;">Max Muster</span><span class="t" style="left:1107.94px;top:1113.08px;font-size:22.11px;color:#0000ff;transform:scaleX(1.2865);font-weight:bold;-webkit-text-stroke:0.35px currentColor;">*</span><span class="t" style="left:1544.12px;top:1112.43px;font-size:22.88px;color:#404040;transform:scaleX(1.0172);-webkit-text-stroke:0.4px currentColor;">DE</span><span class="t" style="left:1684.50px;top:1112.43px;font-size:22.88px;color:#404040;transform:scaleX(1.0029);-webkit-text-stroke:0.4px currentColor;">STANDARD</span><span class="t" style="left:1848.12px;top:1112.43px;font-size:22.88px;color:#404040;transform:scaleX(1.0891);-webkit-text-stroke:0.4px currentColor;">rechnung</span><span class="t" style="left:2080.89px;top:1112.43px;font-size:22.88px;color:#404040;transform:scaleX(1.0879);-webkit-text-stroke:0.4px currentColor;">55.00</span><span class="t" style="left:2183.52px;top:1112.43px;font-size:22.88px;color:#404040;transform:scaleX(1.0879);-webkit-text-stroke:0.4px currentColor;">55.00</span><svg class="b" style="left:2352.75px;top:1102.50px;" width="40" height="40" viewBox="0 0 40 40"><rect width="40" height="40" rx="7.5" fill="#9ccc2c"/><path d="M34.6 4.900 L38.800 3.700 L39.400 5.700 L36.200 6.600 L30 23.900 H10.500 L4.700 10.200 H32.600 Z" fill="#fff"/><circle cx="11.500" cy="31.600" r="3.900" fill="#fff"/><circle cx="26.900" cy="31.600" r="3.900" fill="#fff"/></svg><svg class="b" style="left:2394.75px;top:1102.50px;" width="40" height="40" viewBox="0 0 40 40"><rect width="40" height="40" rx="7.5" fill="#9ccc2c"/><rect x="8.100" y="4.500" width="23.600" height="31.600" fill="#fff"/><circle cx="7.800" cy="6.60" r="1.350" fill="#9ccc2c"/><circle cx="32" cy="6.60" r="1.350" fill="#9ccc2c"/><circle cx="7.800" cy="10.52" r="1.350" fill="#9ccc2c"/><circle cx="32" cy="10.52" r="1.350" fill="#9ccc2c"/><circle cx="7.800" cy="14.44" r="1.350" fill="#9ccc2c"/><circle cx="32" cy="14.44" r="1.350" fill="#9ccc2c"/><circle cx="7.800" cy="18.36" r="1.350" fill="#9ccc2c"/><circle cx="32" cy="18.36" r="1.350" fill="#9ccc2c"/><circle cx="7.800" cy="22.28" r="1.350" fill="#9ccc2c"/><circle cx="32" cy="22.28" r="1.350" fill="#9ccc2c"/><circle cx="7.800" cy="26.20" r="1.350" fill="#9ccc2c"/><circle cx="32" cy="26.20" r="1.350" fill="#9ccc2c"/><circle cx="7.800" cy="30.12" r="1.350" fill="#9ccc2c"/><circle cx="32" cy="30.12" r="1.350" fill="#9ccc2c"/><circle cx="7.800" cy="34.04" r="1.350" fill="#9ccc2c"/><circle cx="32" cy="34.04" r="1.350" fill="#9ccc2c"/><circle cx="11.90" cy="4.200" r="1.350" fill="#9ccc2c"/><circle cx="11.90" cy="36.400" r="1.350" fill="#9ccc2c"/><circle cx="15.90" cy="4.200" r="1.350" fill="#9ccc2c"/><circle cx="15.90" cy="36.400" r="1.350" fill="#9ccc2c"/><circle cx="19.90" cy="4.200" r="1.350" fill="#9ccc2c"/><circle cx="19.90" cy="36.400" r="1.350" fill="#9ccc2c"/><circle cx="23.90" cy="4.200" r="1.350" fill="#9ccc2c"/><circle cx="23.90" cy="36.400" r="1.350" fill="#9ccc2c"/><circle cx="27.90" cy="4.200" r="1.350" fill="#9ccc2c"/><circle cx="27.90" cy="36.400" r="1.350" fill="#9ccc2c"/><rect x="13.900" y="10.200" width="12" height="19.700" fill="#9ccc2c"/></svg><svg class="b" style="left:2436.75px;top:1102.50px;" width="40" height="40" viewBox="0 0 40 40"><rect width="40" height="40" rx="7.5" fill="#f7931e"/><text x="20.700" y="34" font-family="Liberation Sans" font-weight="bold" font-size="38.500" text-anchor="middle" fill="#fff" stroke="#fff" stroke-width=".5" textLength="31.600" lengthAdjust="spacingAndGlyphs">%</text></svg><svg class="b" style="left:2478.75px;top:1102.50px;" width="40" height="40" viewBox="0 0 40 40"><rect width="40" height="40" rx="7.5" fill="#9ccc2c"/><path d="M31.600 10.300 A11.600 12.400 0 1 0 31.600 30.300" fill="none" stroke="#fff" stroke-width="4.600"/><path d="M3.200 16.200 H25.500 L24.500 19.200 H3.200 Z M3.200 22.200 H24 L23 25.200 H3.200 Z" fill="#fff"/></svg><svg class="b" style="left:2520.75px;top:1102.50px;" width="40" height="40" viewBox="0 0 40 40"><rect width="40" height="40" rx="7.5" fill="#9ccc2c"/><rect x="4.200" y="8.100" width="32.400" height="23.900" fill="#fff"/><rect x="10.200" y="12.600" width="20" height="3.100" fill="#9ccc2c"/><rect x="10.200" y="20.700" width="20" height="3.100" fill="#9ccc2c"/></svg><svg class="b" style="left:2562.75px;top:1102.50px;" width="40" height="40" viewBox="0 0 40 40"><rect width="40" height="40" rx="7.5" fill="#9ccc2c"/><path d="M9.400 22.500 A11.800 11.800 0 1 1 20 32.250" fill="none" stroke="#fff" stroke-width="4.200"/><path d="M2.800 25.800 L16.400 18.800 L13.300 31 Z" fill="#fff"/></svg><svg class="b" style="left:2604.75px;top:1102.50px;" width="40" height="40" viewBox="0 0 40 40"><rect width="40" height="40" rx="7.5" fill="#9ccc2c"/><circle cx="19.200" cy="10.200" r="6.900" fill="#fff"/><path d="M9.800 36.300 V28.600 A9.400 9.400 0 0 1 28.600 28.600 V36.300 Z" fill="#fff"/></svg><svg class="b" style="left:2646.75px;top:1102.50px;" width="40" height="40" viewBox="0 0 40 40"><rect width="40" height="40" rx="7.5" fill="#9ccc2c"/><path d="M6.100 9 H10 V13.700 H12.600 V4.300 H15.500 V13.700 H24.900 V4.300 H27.900 V13.700 H30 V9 H33.900 V32 H6.100 Z" fill="#fff"/><rect x="10" y="18.400" width="20" height="9.400" fill="#9ccc2c"/></svg><svg class="b" style="left:2688.75px;top:1102.50px;" width="40" height="40" viewBox="0 0 40 40"><rect width="40" height="40" rx="7.5" fill="#9ccc2c"/><rect x="6.100" y="6.400" width="28.100" height="27.800" fill="#fff"/><text x="20.150" y="29.600" font-family="Liberation Sans" font-weight="bold" font-size="29" text-anchor="middle" fill="#9ccc2c" stroke="#9ccc2c" stroke-width=".6" textLength="21.300" lengthAdjust="spacingAndGlyphs">$</text></svg><svg class="b" style="left:2730.75px;top:1102.50px;" width="40" height="40" viewBox="0 0 40 40"><rect width="40" height="40" rx="7.5" fill="#9ccc2c"/><path d="M4.200 27.800 V10.200 H24.700 L37.900 21.800 V27.800 Z" fill="#fff"/><circle cx="14" cy="28.200" r="4.700" fill="#9ccc2c"/><circle cx="28.100" cy="28.200" r="4.700" fill="#9ccc2c"/><circle cx="14" cy="28.400" r="2.200" fill="#fff"/><circle cx="28.100" cy="28.400" r="2.200" fill="#fff"/></svg><svg class="b" style="left:2772.75px;top:1102.50px;" width="40" height="40" viewBox="0 0 40 40"><rect width="40" height="40" rx="7.5" fill="#9ccc2c"/><path d="M7 21.500 L16 31 L33 6.500" fill="none" stroke="#fff" stroke-width="4"/></svg><svg class="b" style="left:2894.75px;top:1102.50px;" width="40" height="40" viewBox="0 0 40 40"><rect width="40" height="40" rx="7.5" fill="#b1b3b5"/><path d="M11.500 22 L27.500 5.800 L35 12.200 L19 28.500 Z" fill="none" stroke="#fff" stroke-width="2.500"/><path d="M4.300 25.500 V35.800 H17.500 Z" fill="#fff"/></svg><svg class="b" style="left:2942.75px;top:1102.50px;" width="40" height="40" viewBox="0 0 40 40"><rect width="40" height="40" rx="7.5" fill="#b1b3b5"/><path d="M7.300 8 L32.200 33.300 M32.200 8 L7.300 33.300" stroke="#ff0d0d" stroke-width="5.200"/></svg><svg class="b" style="left:2990.75px;top:1102.50px;overflow:hidden;" width="40" height="40" viewBox="0 0 40 40"><path d="M0 29 V7.500 Q0 0 7.500 0 H30" fill="none" stroke="#b1b3b5" stroke-width="8" opacity=".9"/><path d="M10.500 9.500 H40 V32.500 Q40 40 32.500 40 H10.500 Z" fill="#b1b3b5"/></svg><svg class="b" style="left:3038.75px;top:1102.50px;" width="40" height="40" viewBox="0 0 40 40"><rect width="40" height="40" rx="7.5" fill="#b1b3b5"/><text x="20.700" y="29.300" font-family="Liberation Sans" font-weight="bold" font-size="22.800" text-anchor="middle" fill="#fff" textLength="34" lengthAdjust="spacingAndGlyphs">PDF</text></svg><svg class="b" style="left:3086.75px;top:1102.50px;" width="40" height="40" viewBox="0 0 40 40"><path d="M0 4.500 H16.500 L31 19.500 L18.500 34.500 L0 17 Z" fill="#b1b3b5"/><circle cx="7.500" cy="11.500" r="2.800" fill="#fff"/><path d="M21.500 4.500 L37.500 20.500 L24 34.500" fill="none" stroke="#b1b3b5" stroke-width="3.200"/></svg><svg class="b" style="left:50.00px;top:1186.00px;" width="28" height="18" viewBox="0 0 28 18"><path d="M3.400 3.600 L13.800 13.400 L24.200 3.600" fill="none" stroke="#6c6c6c" stroke-width="3.500" stroke-linecap="butt" stroke-linejoin="miter"/></svg><div class="b" style="left:125.25px;top:1182.20px;width:24.00px;height:24.00px;background:#fff;border:1.5px solid #b9b9b9;border-radius:6px;box-sizing:border-box;box-shadow:inset 0 1px 2px rgba(0,0,0,.12);"></div><span class="t" style="left:199.24px;top:1183.93px;font-size:22.88px;color:#404040;transform:scaleX(1.0967);-webkit-text-stroke:0.4px currentColor;">200070</span><span class="t" style="left:527.30px;top:1183.93px;font-size:22.88px;color:#404040;transform:scaleX(1.1197);-webkit-text-stroke:0.4px currentColor;">30.06.2019</span><span class="t" style="left:764.13px;top:1183.93px;font-size:22.88px;color:#404040;transform:scaleX(1.1007);-webkit-text-stroke:0.4px currentColor;">10000</span><span class="t" style="left:969.00px;top:1172.18px;font-size:22.88px;color:#404040;transform:scaleX(1.0796);-webkit-text-stroke:0.4px currentColor;">Max Muster</span><span class="t" style="left:970.48px;top:1197.43px;font-size:22.11px;color:#ff0000;transform:scaleX(1.1973);font-weight:bold;-webkit-text-stroke:0.35px currentColor;">(in Bearbeitung von Administrator)</span><span class="t" style="left:1544.12px;top:1183.93px;font-size:22.88px;color:#404040;transform:scaleX(1.0172);-webkit-text-stroke:0.4px currentColor;">DE</span><span class="t" style="left:1684.50px;top:1183.93px;font-size:22.88px;color:#404040;transform:scaleX(1.0029);-webkit-text-stroke:0.4px currentColor;">STANDARD</span><span class="t" style="left:1848.12px;top:1183.93px;font-size:22.88px;color:#404040;transform:scaleX(1.0891);-webkit-text-stroke:0.4px currentColor;">rechnung</span><span class="t" style="left:2066.61px;top:1183.93px;font-size:22.88px;color:#404040;transform:scaleX(1.1214);-webkit-text-stroke:0.4px currentColor;">110.00</span><span class="t" style="left:2182.59px;top:1183.93px;font-size:22.88px;color:#404040;transform:scaleX(1.1214);-webkit-text-stroke:0.4px currentColor;">110.00</span><svg class="b" style="left:2352.75px;top:1174.00px;" width="40" height="40" viewBox="0 0 40 40"><rect width="40" height="40" rx="7.5" fill="#9ccc2c"/><path d="M34.6 4.900 L38.800 3.700 L39.400 5.700 L36.200 6.600 L30 23.900 H10.500 L4.700 10.200 H32.600 Z" fill="#fff"/><circle cx="11.500" cy="31.600" r="3.900" fill="#fff"/><circle cx="26.900" cy="31.600" r="3.900" fill="#fff"/></svg><svg class="b" style="left:2394.75px;top:1174.00px;" width="40" height="40" viewBox="0 0 40 40"><rect width="40" height="40" rx="7.5" fill="#9ccc2c"/><rect x="8.100" y="4.500" width="23.600" height="31.600" fill="#fff"/><circle cx="7.800" cy="6.60" r="1.350" fill="#9ccc2c"/><circle cx="32" cy="6.60" r="1.350" fill="#9ccc2c"/><circle cx="7.800" cy="10.52" r="1.350" fill="#9ccc2c"/><circle cx="32" cy="10.52" r="1.350" fill="#9ccc2c"/><circle cx="7.800" cy="14.44" r="1.350" fill="#9ccc2c"/><circle cx="32" cy="14.44" r="1.350" fill="#9ccc2c"/><circle cx="7.800" cy="18.36" r="1.350" fill="#9ccc2c"/><circle cx="32" cy="18.36" r="1.350" fill="#9ccc2c"/><circle cx="7.800" cy="22.28" r="1.350" fill="#9ccc2c"/><circle cx="32" cy="22.28" r="1.350" fill="#9ccc2c"/><circle cx="7.800" cy="26.20" r="1.350" fill="#9ccc2c"/><circle cx="32" cy="26.20" r="1.350" fill="#9ccc2c"/><circle cx="7.800" cy="30.12" r="1.350" fill="#9ccc2c"/><circle cx="32" cy="30.12" r="1.350" fill="#9ccc2c"/><circle cx="7.800" cy="34.04" r="1.350" fill="#9ccc2c"/><circle cx="32" cy="34.04" r="1.350" fill="#9ccc2c"/><circle cx="11.90" cy="4.200" r="1.350" fill="#9ccc2c"/><circle cx="11.90" cy="36.400" r="1.350" fill="#9ccc2c"/><circle cx="15.90" cy="4.200" r="1.350" fill="#9ccc2c"/><circle cx="15.90" cy="36.400" r="1.350" fill="#9ccc2c"/><circle cx="19.90" cy="4.200" r="1.350" fill="#9ccc2c"/><circle cx="19.90" cy="36.400" r="1.350" fill="#9ccc2c"/><circle cx="23.90" cy="4.200" r="1.350" fill="#9ccc2c"/><circle cx="23.90" cy="36.400" r="1.350" fill="#9ccc2c"/><circle cx="27.90" cy="4.200" r="1.350" fill="#9ccc2c"/><circle cx="27.90" cy="36.400" r="1.350" fill="#9ccc2c"/><rect x="13.900" y="10.200" width="12" height="19.700" fill="#9ccc2c"/></svg><svg class="b" style="left:2436.75px;top:1174.00px;" width="40" height="40" viewBox="0 0 40 40"><rect width="40" height="40" rx="7.5" fill="#f7931e"/><text x="20.700" y="34" font-family="Liberation Sans" font-weight="bold" font-size="38.500" text-anchor="middle" fill="#fff" stroke="#fff" stroke-width=".5" textLength="31.600" lengthAdjust="spacingAndGlyphs">%</text></svg><svg class="b" style="left:2478.75px;top:1174.00px;" width="40" height="40" viewBox="0 0 40 40"><rect width="40" height="40" rx="7.5" fill="#9ccc2c"/><path d="M31.600 10.300 A11.600 12.400 0 1 0 31.600 30.300" fill="none" stroke="#fff" stroke-width="4.600"/><path d="M3.200 16.200 H25.500 L24.500 19.200 H3.200 Z M3.200 22.200 H24 L23 25.200 H3.200 Z" fill="#fff"/></svg><svg class="b" style="left:2520.75px;top:1174.00px;" width="40" height="40" viewBox="0 0 40 40"><rect width="40" height="40" rx="7.5" fill="#9ccc2c"/><rect x="4.200" y="8.100" width="32.400" height="23.900" fill="#fff"/><rect x="10.200" y="12.600" width="20" height="3.100" fill="#9ccc2c"/><rect x="10.200" y="20.700" width="20" height="3.100" fill="#9ccc2c"/></svg><svg class="b" style="left:2562.75px;top:1174.00px;" width="40" height="40" viewBox="0 0 40 40"><rect width="40" height="40" rx="7.5" fill="#9ccc2c"/><path d="M9.400 22.500 A11.800 11.800 0 1 1 20 32.250" fill="none" stroke="#fff" stroke-width="4.200"/><path d="M2.800 25.800 L16.400 18.800 L13.300 31 Z" fill="#fff"/></svg><svg class="b" style="left:2604.75px;top:1174.00px;" width="40" height="40" viewBox="0 0 40 40"><rect width="40" height="40" rx="7.5" fill="#9ccc2c"/><circle cx="19.200" cy="10.200" r="6.900" fill="#fff"/><path d="M9.800 36.300 V28.600 A9.400 9.400 0 0 1 28.600 28.600 V36.300 Z" fill="#fff"/></svg><svg class="b" style="left:2646.75px;top:1174.00px;" width="40" height="40" viewBox="0 0 40 40"><rect width="40" height="40" rx="7.5" fill="#9ccc2c"/><path d="M6.100 9 H10 V13.700 H12.600 V4.300 H15.500 V13.700 H24.900 V4.300 H27.900 V13.700 H30 V9 H33.900 V32 H6.100 Z" fill="#fff"/><rect x="10" y="18.400" width="20" height="9.400" fill="#9ccc2c"/></svg><svg class="b" style="left:2688.75px;top:1174.00px;" width="40" height="40" viewBox="0 0 40 40"><rect width="40" height="40" rx="7.5" fill="#9ccc2c"/><rect x="6.100" y="6.400" width="28.100" height="27.800" fill="#fff"/><text x="20.150" y="29.600" font-family="Liberation Sans" font-weight="bold" font-size="29" text-anchor="middle" fill="#9ccc2c" stroke="#9ccc2c" stroke-width=".6" textLength="21.300" lengthAdjust="spacingAndGlyphs">$</text></svg><svg class="b" style="left:2730.75px;top:1174.00px;" width="40" height="40" viewBox="0 0 40 40"><rect width="40" height="40" rx="7.5" fill="#9ccc2c"/><path d="M4.200 27.800 V10.200 H24.700 L37.900 21.800 V27.800 Z" fill="#fff"/><circle cx="14" cy="28.200" r="4.700" fill="#9ccc2c"/><circle cx="28.100" cy="28.200" r="4.700" fill="#9ccc2c"/><circle cx="14" cy="28.400" r="2.200" fill="#fff"/><circle cx="28.100" cy="28.400" r="2.200" fill="#fff"/></svg><svg class="b" style="left:2772.75px;top:1174.00px;" width="40" height="40" viewBox="0 0 40 40"><rect width="40" height="40" rx="7.5" fill="#9ccc2c"/><path d="M7 21.500 L16 31 L33 6.500" fill="none" stroke="#fff" stroke-width="4"/></svg><svg class="b" style="left:2894.75px;top:1174.00px;" width="40" height="40" viewBox="0 0 40 40"><rect width="40" height="40" rx="7.5" fill="#b1b3b5"/><path d="M11.500 22 L27.500 5.800 L35 12.200 L19 28.500 Z" fill="none" stroke="#fff" stroke-width="2.500"/><path d="M4.300 25.500 V35.800 H17.500 Z" fill="#fff"/></svg><svg class="b" style="left:2942.75px;top:1174.00px;" width="40" height="40" viewBox="0 0 40 40"><rect width="40" height="40" rx="7.5" fill="#b1b3b5"/><path d="M7.300 8 L32.200 33.300 M32.200 8 L7.300 33.300" stroke="#ff0d0d" stroke-width="5.200"/></svg><svg class="b" style="left:2990.75px;top:1174.00px;overflow:hidden;" width="40" height="40" viewBox="0 0 40 40"><path d="M0 29 V7.500 Q0 0 7.500 0 H30" fill="none" stroke="#b1b3b5" stroke-width="8" opacity=".9"/><path d="M10.500 9.500 H40 V32.500 Q40 40 32.500 40 H10.500 Z" fill="#b1b3b5"/></svg><svg class="b" style="left:3038.75px;top:1174.00px;" width="40" height="40" viewBox="0 0 40 40"><rect width="40" height="40" rx="7.5" fill="#b1b3b5"/><text x="20.700" y="29.300" font-family="Liberation Sans" font-weight="bold" font-size="22.800" text-anchor="middle" fill="#fff" textLength="34" lengthAdjust="spacingAndGlyphs">PDF</text></svg><svg class="b" style="left:3086.75px;top:1174.00px;" width="40" height="40" viewBox="0 0 40 40"><path d="M0 4.500 H16.500 L31 19.500 L18.500 34.500 L0 17 Z" fill="#b1b3b5"/><circle cx="7.500" cy="11.500" r="2.800" fill="#fff"/><path d="M21.500 4.500 L37.500 20.500 L24 34.500" fill="none" stroke="#b1b3b5" stroke-width="3.200"/></svg><div class="b" style="left:24.00px;top:1230.00px;width:3143.50px;height:72.00px;background:#f0f0f0;"></div><div class="b" style="left:24.00px;top:1230.00px;width:80.00px;height:72.00px;background:#eeeeee;"></div><div class="b" style="left:104.00px;top:1230.00px;width:77.00px;height:72.00px;background:#efefef;"></div><svg class="b" style="left:50.00px;top:1258.00px;" width="28" height="18" viewBox="0 0 28 18"><path d="M3.400 3.600 L13.800 13.400 L24.200 3.600" fill="none" stroke="#6c6c6c" stroke-width="3.500" stroke-linecap="butt" stroke-linejoin="miter"/></svg><div class="b" style="left:125.25px;top:1254.20px;width:24.00px;height:24.00px;background:#fff;border:1.5px solid #b9b9b9;border-radius:6px;box-sizing:border-box;box-shadow:inset 0 1px 2px rgba(0,0,0,.12);"></div><span class="t" style="left:199.25px;top:1255.93px;font-size:22.88px;color:#404040;transform:scaleX(1.0906);-webkit-text-stroke:0.4px currentColor;">200069-1</span><span class="t" style="left:527.30px;top:1255.93px;font-size:22.88px;color:#404040;transform:scaleX(1.1197);-webkit-text-stroke:0.4px currentColor;">30.06.2019</span><span class="t" style="left:764.13px;top:1255.93px;font-size:22.88px;color:#404040;transform:scaleX(1.1007);-webkit-text-stroke:0.4px currentColor;">10000</span><span class="t" style="left:969.00px;top:1255.93px;font-size:22.88px;color:#404040;transform:scaleX(1.0796);-webkit-text-stroke:0.4px currentColor;">Max Muster</span><span class="t" style="left:1107.94px;top:1256.58px;font-size:22.11px;color:#0000ff;transform:scaleX(1.2865);font-weight:bold;-webkit-text-stroke:0.35px currentColor;">*</span><span class="t" style="left:1544.12px;top:1255.93px;font-size:22.88px;color:#404040;transform:scaleX(1.0172);-webkit-text-stroke:0.4px currentColor;">DE</span><span class="t" style="left:1684.50px;top:1255.93px;font-size:22.88px;color:#404040;transform:scaleX(1.0029);-webkit-text-stroke:0.4px currentColor;">STANDARD</span><span class="t" style="left:1848.12px;top:1255.93px;font-size:22.88px;color:#404040;transform:scaleX(1.0891);-webkit-text-stroke:0.4px currentColor;">rechnung</span><span class="t" style="left:2067.12px;top:1255.93px;font-size:22.88px;color:#404040;transform:scaleX(1.0873);-webkit-text-stroke:0.4px currentColor;">185.85</span><span class="t" style="left:2182.65px;top:1255.93px;font-size:22.88px;color:#404040;transform:scaleX(1.0873);-webkit-text-stroke:0.4px currentColor;">185.85</span><svg class="b" style="left:2352.75px;top:1246.00px;" width="40" height="40" viewBox="0 0 40 40"><rect width="40" height="40" rx="7.5" fill="#9ccc2c"/><path d="M34.6 4.900 L38.800 3.700 L39.400 5.700 L36.200 6.600 L30 23.900 H10.500 L4.700 10.200 H32.600 Z" fill="#fff"/><circle cx="11.500" cy="31.600" r="3.900" fill="#fff"/><circle cx="26.900" cy="31.600" r="3.900" fill="#fff"/></svg><svg class="b" style="left:2394.75px;top:1246.00px;" width="40" height="40" viewBox="0 0 40 40"><rect width="40" height="40" rx="7.5" fill="#9ccc2c"/><rect x="8.100" y="4.500" width="23.600" height="31.600" fill="#fff"/><circle cx="7.800" cy="6.60" r="1.350" fill="#9ccc2c"/><circle cx="32" cy="6.60" r="1.350" fill="#9ccc2c"/><circle cx="7.800" cy="10.52" r="1.350" fill="#9ccc2c"/><circle cx="32" cy="10.52" r="1.350" fill="#9ccc2c"/><circle cx="7.800" cy="14.44" r="1.350" fill="#9ccc2c"/><circle cx="32" cy="14.44" r="1.350" fill="#9ccc2c"/><circle cx="7.800" cy="18.36" r="1.350" fill="#9ccc2c"/><circle cx="32" cy="18.36" r="1.350" fill="#9ccc2c"/><circle cx="7.800" cy="22.28" r="1.350" fill="#9ccc2c"/><circle cx="32" cy="22.28" r="1.350" fill="#9ccc2c"/><circle cx="7.800" cy="26.20" r="1.350" fill="#9ccc2c"/><circle cx="32" cy="26.20" r="1.350" fill="#9ccc2c"/><circle cx="7.800" cy="30.12" r="1.350" fill="#9ccc2c"/><circle cx="32" cy="30.12" r="1.350" fill="#9ccc2c"/><circle cx="7.800" cy="34.04" r="1.350" fill="#9ccc2c"/><circle cx="32" cy="34.04" r="1.350" fill="#9ccc2c"/><circle cx="11.90" cy="4.200" r="1.350" fill="#9ccc2c"/><circle cx="11.90" cy="36.400" r="1.350" fill="#9ccc2c"/><circle cx="15.90" cy="4.200" r="1.350" fill="#9ccc2c"/><circle cx="15.90" cy="36.400" r="1.350" fill="#9ccc2c"/><circle cx="19.90" cy="4.200" r="1.350" fill="#9ccc2c"/><circle cx="19.90" cy="36.400" r="1.350" fill="#9ccc2c"/><circle cx="23.90" cy="4.200" r="1.350" fill="#9ccc2c"/><circle cx="23.90" cy="36.400" r="1.350" fill="#9ccc2c"/><circle cx="27.90" cy="4.200" r="1.350" fill="#9ccc2c"/><circle cx="27.90" cy="36.400" r="1.350" fill="#9ccc2c"/><rect x="13.900" y="10.200" width="12" height="19.700" fill="#9ccc2c"/></svg><svg class="b" style="left:2436.75px;top:1246.00px;" width="40" height="40" viewBox="0 0 40 40"><rect width="40" height="40" rx="7.5" fill="#9ccc2c"/><text x="20.700" y="34" font-family="Liberation Sans" font-weight="bold" font-size="38.500" text-anchor="middle" fill="#fff" stroke="#fff" stroke-width=".5" textLength="31.600" lengthAdjust="spacingAndGlyphs">%</text></svg><svg class="b" style="left:2478.75px;top:1246.00px;" width="40" height="40" viewBox="0 0 40 40"><rect width="40" height="40" rx="7.5" fill="#9ccc2c"/><path d="M31.600 10.300 A11.600 12.400 0 1 0 31.600 30.300" fill="none" stroke="#fff" stroke-width="4.600"/><path d="M3.200 16.200 H25.500 L24.500 19.200 H3.200 Z M3.200 22.200 H24 L23 25.200 H3.200 Z" fill="#fff"/></svg><svg class="b" style="left:2520.75px;top:1246.00px;" width="40" height="40" viewBox="0 0 40 40"><rect width="40" height="40" rx="7.5" fill="#9ccc2c"/><rect x="4.200" y="8.100" width="32.400" height="23.900" fill="#fff"/><rect x="10.200" y="12.600" width="20" height="3.100" fill="#9ccc2c"/><rect x="10.200" y="20.700" width="20" height="3.100" fill="#9ccc2c"/></svg><svg class="b" style="left:2562.75px;top:1246.00px;" width="40" height="40" viewBox="0 0 40 40"><rect width="40" height="40" rx="7.5" fill="#9ccc2c"/><path d="M9.400 22.500 A11.800 11.800 0 1 1 20 32.250" fill="none" stroke="#fff" stroke-width="4.200"/><path d="M2.800 25.800 L16.400 18.800 L13.300 31 Z" fill="#fff"/></svg><svg class="b" style="left:2604.75px;top:1246.00px;" width="40" height="40" viewBox="0 0 40 40"><rect width="40" height="40" rx="7.5" fill="#9ccc2c"/><circle cx="19.200" cy="10.200" r="6.900" fill="#fff"/><path d="M9.800 36.300 V28.600 A9.400 9.400 0 0 1 28.600 28.600 V36.300 Z" fill="#fff"/></svg><svg class="b" style="left:2646.75px;top:1246.00px;" width="40" height="40" viewBox="0 0 40 40"><rect width="40" height="40" rx="7.5" fill="#9ccc2c"/><path d="M6.100 9 H10 V13.700 H12.600 V4.300 H15.500 V13.700 H24.900 V4.300 H27.900 V13.700 H30 V9 H33.900 V32 H6.100 Z" fill="#fff"/><rect x="10" y="18.400" width="20" height="9.400" fill="#9ccc2c"/></svg><svg class="b" style="left:2688.75px;top:1246.00px;" width="40" height="40" viewBox="0 0 40 40"><rect width="40" height="40" rx="7.5" fill="#9ccc2c"/><rect x="6.100" y="6.400" width="28.100" height="27.800" fill="#fff"/><text x="20.150" y="29.600" font-family="Liberation Sans" font-weight="bold" font-size="29" text-anchor="middle" fill="#9ccc2c" stroke="#9ccc2c" stroke-width=".6" textLength="21.300" lengthAdjust="spacingAndGlyphs">$</text></svg><svg class="b" style="left:2730.75px;top:1246.00px;" width="40" height="40" viewBox="0 0 40 40"><rect width="40" height="40" rx="7.5" fill="#9ccc2c"/><path d="M4.200 27.800 V10.200 H24.700 L37.900 21.800 V27.800 Z" fill="#fff"/><circle cx="14" cy="28.200" r="4.700" fill="#9ccc2c"/><circle cx="28.100" cy="28.200" r="4.700" fill="#9ccc2c"/><circle cx="14" cy="28.400" r="2.200" fill="#fff"/><circle cx="28.100" cy="28.400" r="2.200" fill="#fff"/></svg><svg class="b" style="left:2772.75px;top:1246.00px;" width="40" height="40" viewBox="0 0 40 40"><rect width="40" height="40" rx="7.5" fill="#9ccc2c"/><path d="M7 21.500 L16 31 L33 6.500" fill="none" stroke="#fff" stroke-width="4"/></svg><svg class="b" style="left:2894.75px;top:1246.00px;" width="40" height="40" viewBox="0 0 40 40"><rect width="40" height="40" rx="7.5" fill="#b1b3b5"/><path d="M11.500 22 L27.500 5.800 L35 12.200 L19 28.500 Z" fill="none" stroke="#fff" stroke-width="2.500"/><path d="M4.300 25.500 V35.800 H17.500 Z" fill="#fff"/></svg><svg class="b" style="left:2942.75px;top:1246.00px;" width="40" height="40" viewBox="0 0 40 40"><rect width="40" height="40" rx="7.5" fill="#b1b3b5"/><path d="M7.300 8 L32.200 33.300 M32.200 8 L7.300 33.300" stroke="#ff0d0d" stroke-width="5.200"/></svg><svg class="b" style="left:2990.75px;top:1246.00px;overflow:hidden;" width="40" height="40" viewBox="0 0 40 40"><path d="M0 29 V7.500 Q0 0 7.500 0 H30" fill="none" stroke="#b1b3b5" stroke-width="8" opacity=".9"/><path d="M10.500 9.500 H40 V32.500 Q40 40 32.500 40 H10.500 Z" fill="#b1b3b5"/></svg><svg class="b" style="left:3038.75px;top:1246.00px;" width="40" height="40" viewBox="0 0 40 40"><rect width="40" height="40" rx="7.5" fill="#b1b3b5"/><text x="20.700" y="29.300" font-family="Liberation Sans" font-weight="bold" font-size="22.800" text-anchor="middle" fill="#fff" textLength="34" lengthAdjust="spacingAndGlyphs">PDF</text></svg><svg class="b" style="left:3086.75px;top:1246.00px;" width="40" height="40" viewBox="0 0 40 40"><path d="M0 4.500 H16.500 L31 19.500 L18.500 34.500 L0 17 Z" fill="#b1b3b5"/><circle cx="7.500" cy="11.500" r="2.800" fill="#fff"/><path d="M21.500 4.500 L37.500 20.500 L24 34.500" fill="none" stroke="#b1b3b5" stroke-width="3.200"/></svg><svg class="b" style="left:50.00px;top:1330.00px;" width="28" height="18" viewBox="0 0 28 18"><path d="M3.400 3.600 L13.800 13.400 L24.200 3.600" fill="none" stroke="#6c6c6c" stroke-width="3.500" stroke-linecap="butt" stroke-linejoin="miter"/></svg><div class="b" style="left:125.25px;top:1326.20px;width:24.00px;height:24.00px;background:#fff;border:1.5px solid #b9b9b9;border-radius:6px;box-sizing:border-box;box-shadow:inset 0 1px 2px rgba(0,0,0,.12);"></div><span class="t" style="left:199.24px;top:1327.93px;font-size:22.88px;color:#404040;transform:scaleX(1.0976);-webkit-text-stroke:0.4px currentColor;">200069</span><span class="t" style="left:527.30px;top:1327.93px;font-size:22.88px;color:#404040;transform:scaleX(1.1197);-webkit-text-stroke:0.4px currentColor;">30.06.2019</span><span class="t" style="left:764.13px;top:1327.93px;font-size:22.88px;color:#404040;transform:scaleX(1.1007);-webkit-text-stroke:0.4px currentColor;">10000</span><span class="t" style="left:969.00px;top:1327.93px;font-size:22.88px;color:#404040;transform:scaleX(1.0796);-webkit-text-stroke:0.4px currentColor;">Max Muster</span><span class="t" style="left:1544.12px;top:1327.93px;font-size:22.88px;color:#404040;transform:scaleX(1.0172);-webkit-text-stroke:0.4px currentColor;">DE</span><span class="t" style="left:1684.50px;top:1327.93px;font-size:22.88px;color:#404040;transform:scaleX(1.0029);-webkit-text-stroke:0.4px currentColor;">STANDARD</span><span class="t" style="left:1848.12px;top:1327.93px;font-size:22.88px;color:#404040;transform:scaleX(1.0891);-webkit-text-stroke:0.4px currentColor;">rechnung</span><span class="t" style="left:2094.86px;top:1327.93px;font-size:22.88px;color:#404040;transform:scaleX(1.0845);-webkit-text-stroke:0.4px currentColor;">0.00</span><span class="t" style="left:2183.58px;top:1327.93px;font-size:22.88px;color:#404040;transform:scaleX(1.0845);-webkit-text-stroke:0.4px currentColor;">0.00</span><svg class="b" style="left:2352.75px;top:1318.00px;" width="40" height="40" viewBox="0 0 40 40"><rect width="40" height="40" rx="7.5" fill="#9ccc2c"/><path d="M34.6 4.900 L38.800 3.700 L39.400 5.700 L36.200 6.600 L30 23.900 H10.500 L4.700 10.200 H32.600 Z" fill="#fff"/><circle cx="11.500" cy="31.600" r="3.900" fill="#fff"/><circle cx="26.900" cy="31.600" r="3.900" fill="#fff"/></svg><svg class="b" style="left:2394.75px;top:1318.00px;" width="40" height="40" viewBox="0 0 40 40"><rect width="40" height="40" rx="7.5" fill="#9ccc2c"/><rect x="8.100" y="4.500" width="23.600" height="31.600" fill="#fff"/><circle cx="7.800" cy="6.60" r="1.350" fill="#9ccc2c"/><circle cx="32" cy="6.60" r="1.350" fill="#9ccc2c"/><circle cx="7.800" cy="10.52" r="1.350" fill="#9ccc2c"/><circle cx="32" cy="10.52" r="1.350" fill="#9ccc2c"/><circle cx="7.800" cy="14.44" r="1.350" fill="#9ccc2c"/><circle cx="32" cy="14.44" r="1.350" fill="#9ccc2c"/><circle cx="7.800" cy="18.36" r="1.350" fill="#9ccc2c"/><circle cx="32" cy="18.36" r="1.350" fill="#9ccc2c"/><circle cx="7.800" cy="22.28" r="1.350" fill="#9ccc2c"/><circle cx="32" cy="22.28" r="1.350" fill="#9ccc2c"/><circle cx="7.800" cy="26.20" r="1.350" fill="#9ccc2c"/><circle cx="32" cy="26.20" r="1.350" fill="#9ccc2c"/><circle cx="7.800" cy="30.12" r="1.350" fill="#9ccc2c"/><circle cx="32" cy="30.12" r="1.350" fill="#9ccc2c"/><circle cx="7.800" cy="34.04" r="1.350" fill="#9ccc2c"/><circle cx="32" cy="34.04" r="1.350" fill="#9ccc2c"/><circle cx="11.90" cy="4.200" r="1.350" fill="#9ccc2c"/><circle cx="11.90" cy="36.400" r="1.350" fill="#9ccc2c"/><circle cx="15.90" cy="4.200" r="1.350" fill="#9ccc2c"/><circle cx="15.90" cy="36.400" r="1.350" fill="#9ccc2c"/><circle cx="19.90" cy="4.200" r="1.350" fill="#9ccc2c"/><circle cx="19.90" cy="36.400" r="1.350" fill="#9ccc2c"/><circle cx="23.90" cy="4.200" r="1.350" fill="#9ccc2c"/><circle cx="23.90" cy="36.400" r="1.350" fill="#9ccc2c"/><circle cx="27.90" cy="4.200" r="1.350" fill="#9ccc2c"/><circle cx="27.90" cy="36.400" r="1.350" fill="#9ccc2c"/><rect x="13.900" y="10.200" width="12" height="19.700" fill="#9ccc2c"/></svg><svg class="b" style="left:2436.75px;top:1318.00px;" width="40" height="40" viewBox="0 0 40 40"><rect width="40" height="40" rx="7.5" fill="#9ccc2c"/><text x="20.700" y="34" font-family="Liberation Sans" font-weight="bold" font-size="38.500" text-anchor="middle" fill="#fff" stroke="#fff" stroke-width=".5" textLength="31.600" lengthAdjust="spacingAndGlyphs">%</text></svg><svg class="b" style="left:2478.75px;top:1318.00px;" width="40" height="40" viewBox="0 0 40 40"><rect width="40" height="40" rx="7.5" fill="#9ccc2c"/><path d="M31.600 10.300 A11.600 12.400 0 1 0 31.600 30.300" fill="none" stroke="#fff" stroke-width="4.600"/><path d="M3.200 16.200 H25.500 L24.500 19.200 H3.200 Z M3.200 22.200 H24 L23 25.200 H3.200 Z" fill="#fff"/></svg><svg class="b" style="left:2520.75px;top:1318.00px;" width="40" height="40" viewBox="0 0 40 40"><rect width="40" height="40" rx="7.5" fill="#9ccc2c"/><rect x="4.200" y="8.100" width="32.400" height="23.900" fill="#fff"/><rect x="10.200" y="12.600" width="20" height="3.100" fill="#9ccc2c"/><rect x="10.200" y="20.700" width="20" height="3.100" fill="#9ccc2c"/></svg><svg class="b" style="left:2562.75px;top:1318.00px;" width="40" height="40" viewBox="0 0 40 40"><rect width="40" height="40" rx="7.5" fill="#9ccc2c"/><path d="M9.400 22.500 A11.800 11.800 0 1 1 20 32.250" fill="none" stroke="#fff" stroke-width="4.200"/><path d="M2.800 25.800 L16.400 18.800 L13.300 31 Z" fill="#fff"/></svg><svg class="b" style="left:2604.75px;top:1318.00px;" width="40" height="40" viewBox="0 0 40 40"><rect width="40" height="40" rx="7.5" fill="#9ccc2c"/><circle cx="19.200" cy="10.200" r="6.900" fill="#fff"/><path d="M9.800 36.300 V28.600 A9.400 9.400 0 0 1 28.600 28.600 V36.300 Z" fill="#fff"/></svg><svg class="b" style="left:2646.75px;top:1318.00px;" width="40" height="40" viewBox="0 0 40 40"><rect width="40" height="40" rx="7.5" fill="#9ccc2c"/><path d="M6.100 9 H10 V13.700 H12.600 V4.300 H15.500 V13.700 H24.900 V4.300 H27.900 V13.700 H30 V9 H33.900 V32 H6.100 Z" fill="#fff"/><rect x="10" y="18.400" width="20" height="9.400" fill="#9ccc2c"/></svg><svg class="b" style="left:2688.75px;top:1318.00px;" width="40" height="40" viewBox="0 0 40 40"><rect width="40" height="40" rx="7.5" fill="#9ccc2c"/><rect x="6.100" y="6.400" width="28.100" height="27.800" fill="#fff"/><text x="20.150" y="29.600" font-family="Liberation Sans" font-weight="bold" font-size="29" text-anchor="middle" fill="#9ccc2c" stroke="#9ccc2c" stroke-width=".6" textLength="21.300" lengthAdjust="spacingAndGlyphs">$</text></svg><svg class="b" style="left:2730.75px;top:1318.00px;" width="40" height="40" viewBox="0 0 40 40"><rect width="40" height="40" rx="7.5" fill="#9ccc2c"/><path d="M4.200 27.800 V10.200 H24.700 L37.900 21.800 V27.800 Z" fill="#fff"/><circle cx="14" cy="28.200" r="4.700" fill="#9ccc2c"/><circle cx="28.100" cy="28.200" r="4.700" fill="#9ccc2c"/><circle cx="14" cy="28.400" r="2.200" fill="#fff"/><circle cx="28.100" cy="28.400" r="2.200" fill="#fff"/></svg><svg class="b" style="left:2772.75px;top:1318.00px;" width="40" height="40" viewBox="0 0 40 40"><rect width="40" height="40" rx="7.5" fill="#9ccc2c"/><path d="M7 21.500 L16 31 L33 6.500" fill="none" stroke="#fff" stroke-width="4"/></svg><svg class="b" style="left:2894.75px;top:1318.00px;" width="40" height="40" viewBox="0 0 40 40"><rect width="40" height="40" rx="7.5" fill="#b1b3b5"/><path d="M11.500 22 L27.500 5.800 L35 12.200 L19 28.500 Z" fill="none" stroke="#fff" stroke-width="2.500"/><path d="M4.300 25.500 V35.800 H17.500 Z" fill="#fff"/></svg><svg class="b" style="left:2942.75px;top:1318.00px;" width="40" height="40" viewBox="0 0 40 40"><rect width="40" height="40" rx="7.5" fill="#b1b3b5"/><path d="M7.300 8 L32.200 33.300 M32.200 8 L7.300 33.300" stroke="#ff0d0d" stroke-width="5.200"/></svg><svg class="b" style="left:2990.75px;top:1318.00px;overflow:hidden;" width="40" height="40" viewBox="0 0 40 40"><path d="M0 29 V7.500 Q0 0 7.500 0 H30" fill="none" stroke="#b1b3b5" stroke-width="8" opacity=".9"/><path d="M10.500 9.500 H40 V32.500 Q40 40 32.500 40 H10.500 Z" fill="#b1b3b5"/></svg><svg class="b" style="left:3038.75px;top:1318.00px;" width="40" height="40" viewBox="0 0 40 40"><rect width="40" height="40" rx="7.5" fill="#b1b3b5"/><text x="20.700" y="29.300" font-family="Liberation Sans" font-weight="bold" font-size="22.800" text-anchor="middle" fill="#fff" textLength="34" lengthAdjust="spacingAndGlyphs">PDF</text></svg><svg class="b" style="left:3086.75px;top:1318.00px;" width="40" height="40" viewBox="0 0 40 40"><path d="M0 4.500 H16.500 L31 19.500 L18.500 34.500 L0 17 Z" fill="#b1b3b5"/><circle cx="7.500" cy="11.500" r="2.800" fill="#fff"/><path d="M21.500 4.500 L37.500 20.500 L24 34.500" fill="none" stroke="#b1b3b5" stroke-width="3.200"/></svg><div class="b" style="left:2660.5px;top:802px;width:499px;height:473px;box-sizing:border-box;border:4px solid #a6c9e2;background:#fcfcfc;box-shadow:6px 7px 16px rgba(0,0,0,.38);"></div><div class="b" style="left:2664.50px;top:806.00px;width:491.00px;height:72.00px;background:#f5f5f5;"></div><div class="b" style="left:2664.50px;top:1204.00px;width:491.00px;height:67.00px;background:#f5f5f5;"></div><span class="t" style="left:2683.08px;top:830.68px;font-size:28.14px;color:#444;transform:scaleX(1.1485);font-weight:bold;-webkit-text-stroke:0.35px currentColor;">Labels</span><svg class="b" style="left:3104.00px;top:826.00px;" width="32" height="32" viewBox="0 0 32 32"><path d="M5 5 L27 27 M27 5 L5 27" stroke="#444" stroke-width="4.200" stroke-linecap="butt"/></svg><div class="b" style="left:2685.00px;top:909.20px;width:24.00px;height:24.00px;background:#fff;border:1.5px solid #b9b9b9;border-radius:6px;box-sizing:border-box;box-shadow:inset 0 1px 2px rgba(0,0,0,.12);"></div><div class="b" style="left:2726.00px;top:908.00px;width:267.90px;height:35.70px;background:#838cc8;border-radius:11px;"></div><span class="t" style="left:2739.51px;top:915.37px;font-size:24.96px;color:#000;transform:scaleX(1.0935);-webkit-text-stroke:0.4px currentColor;">Lieferpapiere fehlen</span><div class="b" style="left:2685.00px;top:955.20px;width:24.00px;height:24.00px;background:#fff;border:1.5px solid #b9b9b9;border-radius:6px;box-sizing:border-box;box-shadow:inset 0 1px 2px rgba(0,0,0,.12);"></div><div class="b" style="left:2726.00px;top:954.00px;width:88.80px;height:35.70px;background:#ff0000;border-radius:11px;"></div><span class="t" style="left:2739.68px;top:961.37px;font-size:24.96px;color:#fff;transform:scaleX(1.0078);-webkit-text-stroke:0.4px currentColor;">PRIO</span><div class="b" style="left:2685.00px;top:1001.20px;width:24.00px;height:24.00px;background:#fff;border:1.5px solid #b9b9b9;border-radius:6px;box-sizing:border-box;box-shadow:inset 0 1px 2px rgba(0,0,0,.12);"></div><div class="b" style="left:2726.00px;top:1000.00px;width:334.00px;height:35.70px;background:#43b1d0;border-radius:11px;"></div><span class="t" style="left:2739.55px;top:1007.37px;font-size:24.96px;color:#000;transform:scaleX(1.0743);-webkit-text-stroke:0.4px currentColor;">Kundenservice Rückfrage</span><div class="b" style="left:2685.00px;top:1047.20px;width:24.00px;height:24.00px;background:#fff;border:1.5px solid #b9b9b9;border-radius:6px;box-sizing:border-box;box-shadow:inset 0 1px 2px rgba(0,0,0,.12);"></div><div class="b" style="left:2726.00px;top:1046.00px;width:158.00px;height:35.70px;background:#f59e0b;border-radius:11px;"></div><span class="t" style="left:2741.65px;top:1053.37px;font-size:24.96px;color:#000;transform:scaleX(1.0900);-webkit-text-stroke:0.4px currentColor;">Ausliefern!</span><div class="b" style="left:2685.00px;top:1093.20px;width:24.00px;height:24.00px;background:#fff;border:1.5px solid #b9b9b9;border-radius:6px;box-sizing:border-box;box-shadow:inset 0 1px 2px rgba(0,0,0,.12);"></div><div class="b" style="left:2726.00px;top:1092.00px;width:260.00px;height:35.70px;background:#ffcc00;border-radius:11px;"></div><span class="t" style="left:2739.56px;top:1099.37px;font-size:24.96px;color:#000;transform:scaleX(1.0685);-webkit-text-stroke:0.4px currentColor;">DHL Adresse falsch</span><div class="b" style="left:2685.00px;top:1139.20px;width:24.00px;height:24.00px;background:#3b82f7;border-radius:6px;"></div><svg class="b" style="left:2685.00px;top:1139.20px;" width="24" height="24" viewBox="0 0 24 24"><path d="M6 12.5 L10.3 17.3 L18.2 6.8" fill="none" stroke="#fff" stroke-width="3" stroke-linecap="round" stroke-linejoin="round"/></svg><div class="b" style="left:2726.00px;top:1138.00px;width:327.00px;height:35.70px;background:#a8c943;border-radius:11px;"></div><span class="t" style="left:2739.49px;top:1145.37px;font-size:24.96px;color:#000;transform:scaleX(1.1057);-webkit-text-stroke:0.4px currentColor;">Produktion Status klären</span><div class="b" style="left:2690.00px;top:1211.00px;width:376.00px;height:55.00px;background:#42b6c4;border-radius:12px;"></div><span class="t" style="left:2713.00px;top:1227.67px;font-size:24.96px;color:#fff;transform:scaleX(1.1005);-webkit-text-stroke:0.4px currentColor;">Labels erstellen/bearbeiten</span>
</div>
</body></html>
